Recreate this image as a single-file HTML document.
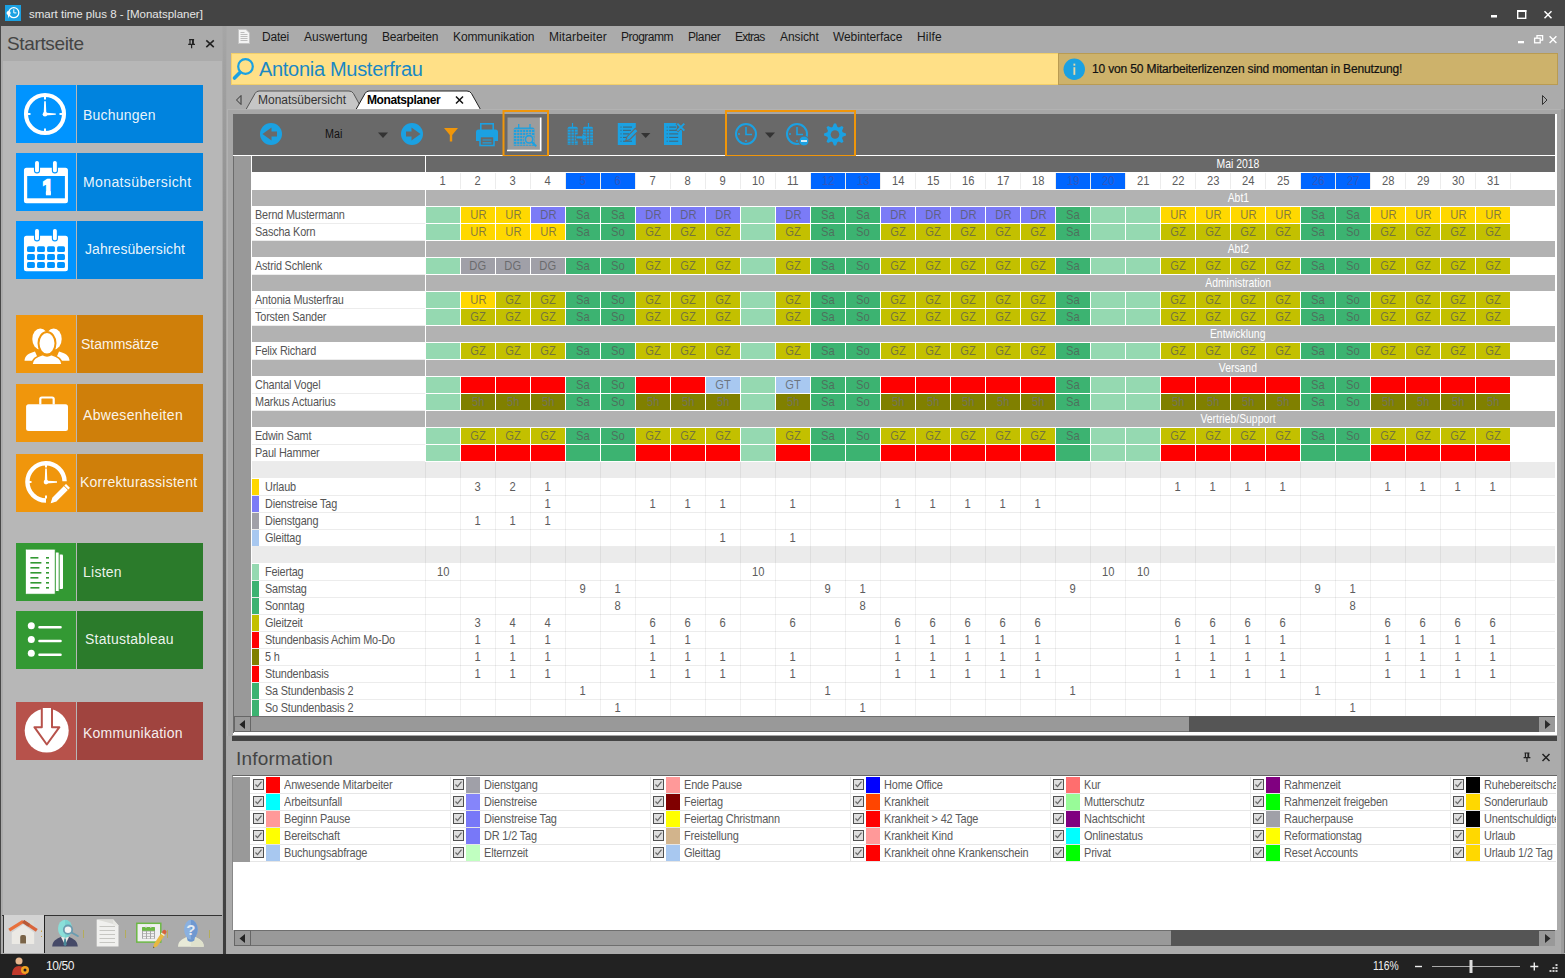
<!DOCTYPE html><html lang="de"><head><meta charset="utf-8"><title>smart time plus 8 - [Monatsplaner]</title><style>
*{box-sizing:border-box;margin:0;padding:0}
html,body{width:1565px;height:978px;overflow:hidden;background:#ababab}
body{position:relative;font-family:"Liberation Sans",sans-serif;font-size:12px;color:#111}
.a{position:absolute}
.t{position:absolute;white-space:nowrap;line-height:1}
#title{left:0;top:0;width:1565px;height:26px;background:#444}
#side{left:0;top:26px;width:222px;height:928px;background:#b7b7b7}
.btn{position:absolute;left:16px;width:187px;height:58px}
.btn .i{position:absolute;left:0;top:0;width:60px;height:58px}
.btn .x{position:absolute;left:61px;top:0;width:126px;height:58px;color:rgba(255,255,255,.93);font-size:14px;letter-spacing:.25px;line-height:60px;white-space:nowrap}
.btn svg{position:absolute;left:0;top:0}
.g{font-size:13px;color:#666}
.cell{position:absolute;width:34px;height:16px;text-align:center;font-size:13px;line-height:16px;color:rgba(85,85,85,.72)}
.num{position:absolute;width:34px;height:16px;text-align:center;font-size:13px;line-height:16px;color:#5c5c5c}
.nm{position:absolute;left:255px;font-size:13px;line-height:16px;color:#555;white-space:nowrap;letter-spacing:-.2px;transform:scaleX(.835);transform-origin:0 50%}
.cell i,.num i,.grp b i{display:inline-block;font-style:normal;transform:scaleX(.86)}
.grp b i{transform:scaleX(.8)}
.grp{position:absolute;left:252px;width:1303px;height:16px;background:#b2b2b2}
/*sep*/.grp u{position:absolute;left:173px;top:0;width:1px;height:16px;background:#fff}
.grp b{position:absolute;left:886px;width:200px;text-align:center;font-weight:normal;font-style:normal;color:#fff;font-size:13px;line-height:16px;letter-spacing:0}
.lg{position:absolute;font-size:13px;line-height:16px;color:#5a5a5a;white-space:nowrap;letter-spacing:-.2px;transform:scaleX(.842);transform-origin:0 50%}
.cb{position:absolute;width:11px;height:11px;border:1px solid #505050;background:#dedede}
.sw{position:absolute;width:14px;height:16px}
</style></head><body><div id="title" class="a"></div><svg class="a" style="left:5px;top:5px" width="16" height="16" viewBox="0 0 16 16"><rect width="16" height="16" fill="#1ba1e2"/><circle cx="8.800" cy="7.700" r="5" fill="none" stroke="#fff" stroke-width="1.300"/><path d="M8.800 4.300v3.600h2.600" stroke="#fff" stroke-width="1" fill="none"/><circle cx="3.600" cy="8" r="2.100" fill="#fff"/><path d="M2.800 9.500l.6 4 1.200-4z" fill="#fff"/></svg><div class="t" style="left:29px;top:8.6px;font-size:11.5px;color:#e6e6e6;letter-spacing:0">smart time plus 8 - [Monatsplaner]</div><svg class="a" style="left:1485px;top:5px" width="75" height="18" viewBox="0 0 75 18"><rect x="6" y="10" width="6" height="2.5" fill="#fff"/><rect x="32.7" y="5.7" width="8" height="7.6" fill="none" stroke="#fff" stroke-width="1.4"/><rect x="32" y="5" width="9.4" height="2" fill="#fff"/><path d="M59.5 6.3l7 7M66.5 6.3l-7 7" stroke="#fff" stroke-width="1.5"/></svg><svg class="a" style="left:1512px;top:32px" width="50" height="14" viewBox="0 0 50 14"><rect x="6" y="9" width="6" height="2.3" fill="#fff"/><rect x="22.6" y="6.2" width="5.6" height="4.6" fill="none" stroke="#fff" stroke-width="1.3"/><path d="M25 6V3.6h5.6v4.6H28.6" fill="none" stroke="#fff" stroke-width="1.3"/><path d="M37.6 4.2l6.8 6.8M44.4 4.2l-6.8 6.8" stroke="#fff" stroke-width="1.4"/></svg><div id="side" class="a"></div><div class="a" style="left:0;top:26px;width:3px;height:928px;background:#ababab"></div><div class="a" style="left:0;top:26px;width:1px;height:928px;background:#484848"></div><div class="a" style="left:1px;top:26px;width:221px;height:35px;background:#ababab"></div><div class="t" style="left:7px;top:34px;font-size:19px;color:#444;letter-spacing:-.35px">Startseite</div><svg class="a" style="left:186px;top:37px" width="34" height="14" viewBox="0 0 34 14"><g transform="translate(-.4 .7)"><path d="M3.500 2h5M4.400 2v4.400M7.600 2v4.400M2.600 6.600h6.800M6 6.600V10.600" stroke="#222" stroke-width="1.200" fill="none"/><rect x="6.400" y="2" width="1.600" height="4.400" fill="#222"/></g><path d="M20.300 3.300l7.500 6.800M27.800 3.300l-7.500 6.800" stroke="#222" stroke-width="1.600"/></svg><div class="a" style="left:222px;top:26px;width:5px;height:928px;background:#a8a8a8"></div><div class="a" style="left:223px;top:26px;width:3px;height:928px;background:linear-gradient(#a6a6a6,#3c3c3c)"></div><div class="btn" style="top:85px"><div class="i" style="background:#0094ff"><svg width="60" height="58" viewBox="0 0 60 58"><circle cx="29" cy="29" r="19" fill="none" stroke="#fff" stroke-width="4.100"/><path d="M27.700 29L28.200 16.200h1.600L30.300 27.800 39.800 28.400v1.400L29 30.600z" fill="#fff"/><circle cx="29" cy="29.200" r="2.300" fill="#fff"/><path d="M29 11.500v3M29 43.500v3M11.500 29h3M43.500 29h3" stroke="#fff" stroke-width="2"/></svg></div><div class="x" style="background:#0083de;padding-left:6px;line-height:60px;letter-spacing:0.2px">Buchungen</div></div><div class="btn" style="top:153px"><div class="i" style="background:#0094ff"><svg width="60" height="58" viewBox="0 0 60 58"><path d="M7.950 17.250a2.500 2.500 0 0 1 2.500-2.500h39a2.500 2.500 0 0 1 2.500 2.500v30.450a2.500 2.500 0 0 1-2.500 2.500h-39a2.500 2.500 0 0 1-2.500-2.500z" fill="#fff"/><rect x="11.200" y="23" width="37.700" height="22.300" fill="#0094ff"/><rect x="18.500" y="7.400" width="5" height="12.500" rx="2.400" fill="#fff" stroke="#0094ff" stroke-width="1.100"/><rect x="36.400" y="7.400" width="5" height="12.500" rx="2.400" fill="#fff" stroke="#0094ff" stroke-width="1.100"/><clipPath id="k1"><path d="M20 20H40V37.600H34.900V46H29.900V37.600H20z"/></clipPath><text x="31.700" y="41.300" clip-path="url(#k1)" style="font-family:'Liberation Sans',sans-serif" font-size="20" fill="#fff" stroke="#fff" stroke-width="2.600" stroke-linejoin="miter" text-anchor="middle">1</text></svg></div><div class="x" style="background:#0083de;padding-left:6px;line-height:58px;letter-spacing:0.39px">Monatsübersicht</div></div><div class="btn" style="top:221px"><div class="i" style="background:#0094ff"><svg width="60" height="58" viewBox="0 0 60 58"><path d="M7.950 17.250a2.500 2.500 0 0 1 2.500-2.500h39a2.500 2.500 0 0 1 2.500 2.500v30.450a2.500 2.500 0 0 1-2.500 2.500h-39a2.500 2.500 0 0 1-2.500-2.500z" fill="#fff"/><rect x="11.03" y="25.13" width="7.870" height="5.800" rx="1.500" fill="#0094ff"/><rect x="21.05" y="25.13" width="7.870" height="5.800" rx="1.500" fill="#0094ff"/><rect x="31.07" y="25.13" width="7.870" height="5.800" rx="1.500" fill="#0094ff"/><rect x="41.09" y="25.13" width="7.870" height="5.800" rx="1.500" fill="#0094ff"/><rect x="11.03" y="33.11" width="7.870" height="5.800" rx="1.500" fill="#0094ff"/><rect x="21.05" y="33.11" width="7.870" height="5.800" rx="1.500" fill="#0094ff"/><rect x="31.07" y="33.11" width="7.870" height="5.800" rx="1.500" fill="#0094ff"/><rect x="41.09" y="33.11" width="7.870" height="5.800" rx="1.500" fill="#0094ff"/><rect x="11.03" y="41.09" width="7.870" height="5.800" rx="1.500" fill="#0094ff"/><rect x="21.05" y="41.09" width="7.870" height="5.800" rx="1.500" fill="#0094ff"/><rect x="31.07" y="41.09" width="7.870" height="5.800" rx="1.500" fill="#0094ff"/><rect x="41.09" y="41.09" width="7.870" height="5.800" rx="1.500" fill="#0094ff"/><rect x="18.500" y="7.400" width="5" height="12.500" rx="2.400" fill="#fff" stroke="#0094ff" stroke-width="1.100"/><rect x="36.400" y="7.400" width="5" height="12.500" rx="2.400" fill="#fff" stroke="#0094ff" stroke-width="1.100"/></svg></div><div class="x" style="background:#0083de;padding-left:8px;line-height:56px;letter-spacing:0.08px">Jahresübersicht</div></div><div class="btn" style="top:315px"><div class="i" style="background:#f0960c"><svg width="60" height="58" viewBox="0 0 60 58"><g fill="#fff"><ellipse cx="24.300" cy="24" rx="8" ry="10.500"/><ellipse cx="37.700" cy="24" rx="8" ry="10.500"/><path d="M8.500 45.800c.3-5.500 4.200-7.500 10.500-9.300l4 9.300z"/><path d="M53.500 45.800c-.3-5.500-4.200-7.500-10.500-9.300l-4 9.300z"/></g><ellipse cx="31" cy="28.300" rx="8.500" ry="11.300" fill="#fff" stroke="#f0960c" stroke-width="2"/><path d="M15.800 49.800c.3-6.300 4.700-8.300 10.900-10.200 2.800 1.700 5.800 1.700 8.600 0 6.200 1.900 10.600 3.900 10.900 10.200z" fill="#fff" stroke="#f0960c" stroke-width="1.500"/></svg></div><div class="x" style="background:#cf7f0a;padding-left:4px;line-height:58px;letter-spacing:0px">Stammsätze</div></div><div class="btn" style="top:384px"><div class="i" style="background:#f0960c"><svg width="60" height="58" viewBox="0 0 60 58"><rect x="10.100" y="20.200" width="41.900" height="26.800" rx="2.500" fill="#fff"/><path d="M24.300 20.500v-5.500a1.500 1.500 0 0 1 1.500-1.500h10.400a1.500 1.500 0 0 1 1.500 1.500v5.500" fill="none" stroke="#fff" stroke-width="2.200"/></svg></div><div class="x" style="background:#cf7f0a;padding-left:6px;line-height:62px;letter-spacing:0.33px">Abwesenheiten</div></div><div class="btn" style="top:454px"><div class="i" style="background:#f0960c"><svg width="60" height="58" viewBox="0 0 60 58"><path d="M48.600 27.300A18.600 18.600 0 1 0 30 46.500" fill="none" stroke="#fff" stroke-width="4.400"/><path d="M28.700 27.900L29.200 14.500h1.600L31.300 26.700 41 27.300v1.400L30 29.500z" fill="#fff"/><circle cx="30" cy="28.100" r="2.300" fill="#fff"/><path d="M30 10.500v3M12.500 27.900h3M30 41.500v3" stroke="#fff" stroke-width="2"/><path d="M33.600 50.300L35.800 43.300 50 29.100 54.800 33.900 40.600 48.100z" fill="#fff" stroke="#f0960c" stroke-width="1.300" stroke-linejoin="round"/><path d="M47.700 31.400l4.800 4.800" stroke="#f0960c" stroke-width="1"/></svg></div><div class="x" style="background:#cf7f0a;padding-left:3px;line-height:56px;letter-spacing:0.25px">Korrekturassistent</div></div><div class="btn" style="top:543px"><div class="i" style="background:#339933"><svg width="60" height="58" viewBox="0 0 60 58"><rect x="39" y="11.500" width="8" height="34.500" rx="1" fill="#fff"/><rect x="36" y="9" width="7.200" height="39.500" rx="1" fill="#fff" stroke="#339933" stroke-width="1"/><rect x="9.300" y="6.100" width="30" height="45.200" rx="1" fill="#fff" stroke="#339933" stroke-width="1"/><rect x="14.400" y="14" width="8" height="1.600" fill="#339933"/><rect x="30" y="14" width="3" height="1.600" fill="#339933"/><rect x="14.400" y="19" width="11" height="1.600" fill="#339933"/><rect x="30" y="19" width="3" height="1.600" fill="#339933"/><rect x="14.400" y="24" width="9" height="1.600" fill="#339933"/><rect x="30" y="24" width="3" height="1.600" fill="#339933"/><rect x="14.400" y="29" width="11" height="1.600" fill="#339933"/><rect x="30" y="29" width="3" height="1.600" fill="#339933"/><rect x="14.400" y="34" width="8" height="1.600" fill="#339933"/><rect x="30" y="34" width="3" height="1.600" fill="#339933"/><rect x="14.400" y="39" width="11" height="1.600" fill="#339933"/><rect x="30" y="39" width="3" height="1.600" fill="#339933"/><rect x="14.400" y="44" width="9" height="1.600" fill="#339933"/><rect x="30" y="44" width="3" height="1.600" fill="#339933"/></svg></div><div class="x" style="background:#2b7b2b;padding-left:6px;line-height:58px;letter-spacing:0.25px">Listen</div></div><div class="btn" style="top:611px"><div class="i" style="background:#339933"><svg width="60" height="58" viewBox="0 0 60 58"><circle cx="15.300" cy="14.700" r="3.500" fill="#fff"/><circle cx="15.300" cy="28.400" r="3.500" fill="#fff"/><circle cx="15.300" cy="42.300" r="3.500" fill="#fff"/><path d="M23.500 16.200h21M23.500 30h21M23.500 43.800h21" stroke="#fff" stroke-width="2.600" stroke-linecap="round"/></svg></div><div class="x" style="background:#2b7b2b;padding-left:8px;line-height:56px;letter-spacing:0.25px">Statustableau</div></div><div class="btn" style="top:702px"><div class="i" style="background:#b7524b"><svg width="60" height="58" viewBox="0 0 60 58"><circle cx="30.700" cy="28.600" r="22" fill="#fff"/><path d="M25.800 6v19.200h-7.400L30.800 42.500 43.400 25.200h-7.400V6" fill="#fff" stroke="#b7524b" stroke-width="2" stroke-linejoin="round"/></svg></div><div class="x" style="background:#a0443f;padding-left:6px;line-height:62px;letter-spacing:0.25px">Kommunikation</div></div><div class="a" style="left:2px;top:915px;width:220px;height:39px;background:#ababab;border-top:1px solid #333"></div><div class="a" style="left:3px;top:915px;width:42px;height:38px;background:#d3d3d3;border-right:1px solid #222;border-left:1px solid #333"></div><svg class="a" style="left:0;top:915px" width="222" height="38" viewBox="0 0 222 38"><rect x="29.500" y="5" width="4.300" height="8" fill="#d8d8d2"/><path d="M11.800 17.500L23.200 9.500l11 8v11.400H11.800z" fill="#ebe9e4"/><path d="M20.200 28.500v-6.500a2 2 0 0 1 2-2h1.800a2 2 0 0 1 2 2v6.500z" fill="#7a6448"/><path d="M9.200 15.200L23.200 6.300" stroke="#e8703c" stroke-width="3.200" fill="none"/><path d="M23.200 6.300l13.600 9" stroke="#d9643a" stroke-width="3.200" fill="none"/><path d="M23.200 6.300l6 4" stroke="#b85a38" stroke-width="3.200" fill="none"/><rect x="41" y="15.500" width="1" height="1.500" fill="#c8a040"/><rect x="41" y="21" width="1" height="1" fill="#c8a040"/><path d="M52.200 31.600c.5-6 4-7.500 8.500-9.600h8.600c4.500 2.100 8 3.600 8.500 9.600z" fill="#464a68"/><path d="M61 22l4 8 4-8z" fill="#ecebe6"/><path d="M64.300 23.500h1.500l.8 6-1.500 2-1.500-2z" fill="#4a8a9a"/><ellipse cx="65" cy="13.700" rx="7" ry="9" fill="#8adfd9"/><path d="M65 4.700a7 9 0 0 1 0 18z" fill="#7ad3d0"/><path d="M71.500 17.500l6.300 3.500" stroke="#6a9cb0" stroke-width="2" stroke-linecap="round"/><circle cx="68" cy="14.700" r="4.200" fill="#f2f2f2" stroke="#6a9cb0" stroke-width="1.800"/><rect x="83" y="15" width="1" height="8" fill="#b4ac5a"/><path d="M96.700 4.500h16.500l5.300 6v21H96.700z" fill="#f0f0ee"/><path d="M96.700 4.500h16.500l5.300 6z" fill="#dcdcd8"/><path d="M113.200 4.500v6h5.300z" fill="#e8e8e4"/><path d="M99.500 11.5h15.500" stroke="#c6c6c2" stroke-width="1"/><path d="M99.500 15.5h15.500" stroke="#c6c6c2" stroke-width="1"/><path d="M99.500 19.5h15.500" stroke="#c6c6c2" stroke-width="1"/><path d="M99.500 23.5h15.500" stroke="#c6c6c2" stroke-width="1"/><path d="M99.500 27.5h15.500" stroke="#c6c6c2" stroke-width="1"/><rect x="125" y="15" width="1" height="8" fill="#b4ac5a"/><rect x="136.800" y="8.300" width="24" height="18.800" fill="#f0f0f0" stroke="#6cb845" stroke-width="1.500"/><rect x="142" y="12" width="13" height="12" rx="1" fill="#a6a6a6"/><path d="M142 13a1 1 0 0 1 1-1h11a1 1 0 0 1 1 1v2.700h-13z" fill="#6cb845"/><rect x="143" y="16.5" width="3" height="1.800" fill="#f4f4f4"/><rect x="147" y="16.5" width="3" height="1.800" fill="#f4f4f4"/><rect x="151" y="16.5" width="3" height="1.800" fill="#f4f4f4"/><rect x="143" y="19.1" width="3" height="1.800" fill="#f4f4f4"/><rect x="147" y="19.1" width="3" height="1.800" fill="#f4f4f4"/><rect x="151" y="19.1" width="3" height="1.800" fill="#f4f4f4"/><rect x="143" y="21.7" width="3" height="1.800" fill="#f4f4f4"/><rect x="147" y="21.7" width="3" height="1.800" fill="#f4f4f4"/><rect x="151" y="21.7" width="3" height="1.800" fill="#f4f4f4"/><path d="M146 10.500v2.500M150.800 10.500v2.500" stroke="#ddd" stroke-width="1"/><path d="M153 33.200l1-4.200 7.800-11.700 3.300 2.200-7.800 11.700z" fill="#e8b840"/><path d="M161.800 17.300l1.200-1.800a2 2 0 0 1 3.300 2.200l-1.200 1.800z" fill="#d8603c"/><path d="M161.100 18.300l3.300 2.200" stroke="#eee" stroke-width="1.200"/><path d="M153 33.200l.4-1.700 1.200.8z" fill="#444"/><rect x="167" y="15" width="1" height="8" fill="#b4ac5a"/><path d="M178 31.800c.3-5.500 3-7 8-9.500h9.800c5 2.500 7.700 4 8 9.500z" fill="#e8ead8"/><path d="M190.900 22.300h4.900c5 2.500 7.700 4 8 9.500h-12.900z" fill="#dfe1cc"/><path d="M186.500 20h8.800l-1 5.500q-3.400 2.500-6.800 0z" fill="#6a94cc"/><ellipse cx="190.900" cy="14.600" rx="6.800" ry="9.800" fill="#8ab0e0"/><path d="M190.900 4.800a6.800 9.800 0 0 1 0 19.600z" fill="#6f98d0"/><text x="190.900" y="20" style="font-family:'Liberation Sans',sans-serif" font-weight="bold" font-size="15" fill="#e6ecf2" text-anchor="middle">?</text><rect x="209" y="15" width="1" height="8" fill="#b4ac5a"/></svg><div class="a" style="left:0;top:954px;width:1565px;height:24px;background:#222"></div><svg class="a" style="left:11px;top:956px" width="20" height="20" viewBox="0 0 20 20"><circle cx="8" cy="5" r="3.5" fill="#e8b890"/><path d="M1 19c0-6 3-9 7-9s7 3 7 9z" fill="#c0392b"/><circle cx="14" cy="14" r="4" fill="#f0a020"/><circle cx="14" cy="14" r="1.5" fill="#1e1e1e"/></svg><div class="t" style="left:46px;top:960px;font-size:12px;color:#f0f0f0;letter-spacing:-.4px">10/50</div><div class="t" style="left:1372.5px;top:960px;font-size:12px;color:#f0f0f0;transform:scaleX(.86);transform-origin:0 50%">116%</div><svg class="a" style="left:1410px;top:956px" width="150" height="20" viewBox="0 0 150 20"><path d="M5 10.5h7" stroke="#eee" stroke-width="1.4"/><path d="M22 10.5h88" stroke="#aaa" stroke-width="1"/><rect x="59.5" y="4" width="3" height="13" fill="#ddd"/><path d="M120.300 10.500h8M124.300 6.500v8" stroke="#eee" stroke-width="1.400"/><g fill="#ccc"><rect x="145.500" y="8" width="2" height="2"/><rect x="145.500" y="11" width="2" height="2"/><rect x="145.500" y="14" width="2" height="2"/><rect x="142.500" y="11" width="2" height="2"/><rect x="142.500" y="14" width="2" height="2"/><rect x="139.500" y="14" width="2" height="2"/></g></svg><svg class="a" style="left:238px;top:29px" width="12" height="15" viewBox="0 0 12 15"><path d="M.5 .5h7.5l3.5 3.5v10.5H.5z" fill="#f4f4f4" stroke="#c4c4c4" stroke-width="1"/><path d="M2.5 5.5h7M2.5 7.5h7M2.5 9.5h7M2.5 11.5h7M2.5 3.500h4" stroke="#bdbdbd" stroke-width="1"/></svg><div class="t mn" style="left:262px;top:31px;font-size:12px;color:#1a1a1a;letter-spacing:-0.2px">Datei</div><div class="t mn" style="left:304px;top:31px;font-size:12px;color:#1a1a1a;letter-spacing:0px">Auswertung</div><div class="t mn" style="left:382px;top:31px;font-size:12px;color:#1a1a1a;letter-spacing:-0.18px">Bearbeiten</div><div class="t mn" style="left:453px;top:31px;font-size:12px;color:#1a1a1a;letter-spacing:-0.1px">Kommunikation</div><div class="t mn" style="left:549px;top:31px;font-size:12px;color:#1a1a1a;letter-spacing:0.1px">Mitarbeiter</div><div class="t mn" style="left:621px;top:31px;font-size:12px;color:#1a1a1a;letter-spacing:-0.5px">Programm</div><div class="t mn" style="left:688px;top:31px;font-size:12px;color:#1a1a1a;letter-spacing:-0.4px">Planer</div><div class="t mn" style="left:735px;top:31px;font-size:12px;color:#1a1a1a;letter-spacing:-0.75px">Extras</div><div class="t mn" style="left:780px;top:31px;font-size:12px;color:#1a1a1a;letter-spacing:-0.1px">Ansicht</div><div class="t mn" style="left:833px;top:31px;font-size:12px;color:#1a1a1a;letter-spacing:-0.1px">Webinterface</div><div class="t mn" style="left:917px;top:31px;font-size:12px;color:#1a1a1a;letter-spacing:0.15px">Hilfe</div><div class="a" style="left:231px;top:53px;width:827px;height:32px;background:#ffe087;border:1px solid #f2cf6a;border-right:none"></div><svg class="a" style="left:231px;top:56px" width="26" height="26" viewBox="0 0 26 26"><circle cx="14.5" cy="10.500" r="7.3" fill="none" stroke="#1ba1e2" stroke-width="2.2"/><path d="M9 16.500l-5.500 5.500" stroke="#1ba1e2" stroke-width="3.6" stroke-linecap="round"/></svg><div class="t" style="left:259px;top:59px;font-size:20px;color:#1a88c4;letter-spacing:-.3px">Antonia Musterfrau</div><div class="a" style="left:1058px;top:53px;width:500px;height:32px;background:#cdb26b;border:1px solid #b99b52"></div><svg class="a" style="left:1063px;top:58px" width="22.500" height="22.500" viewBox="0 0 22 22"><circle cx="11" cy="11" r="10.500" fill="#1ba1e2"/><rect x="10.200" y="9" width="1.8" height="7.500" fill="#e8d9a8"/><rect x="10.200" y="5.500" width="1.800" height="2" fill="#e8d9a8"/></svg><div class="t" style="left:1092px;top:63px;font-size:12px;color:#111;letter-spacing:-.15px;-webkit-text-stroke:.2px #111">10 von 50 Mitarbeiterlizenzen sind momentan in Benutzung!</div><svg class="a" style="left:231px;top:88px" width="1330" height="22" viewBox="0 0 1330 22"><path d="M10 7.500l-4.500 4.500 4.500 4.500z" fill="none" stroke="#333" stroke-width="1"/><path d="M1311.500 7.500l4.500 4.500-4.500 4.500z" fill="none" stroke="#333" stroke-width="1"/><path d="M15 21.500L24 5.500q1.500-2.500 4-2.500h90q3 0 4.500 2.500L131 21" fill="#c6c6c6" stroke="#555" stroke-width="1"/><path d="M125 21.500L134 5.500q1.500-2.500 4-2.500h98q3 0 4.500 2.500L249.500 21.500" fill="#fff" stroke="#222" stroke-width="1"/><path d="M225 8.500l7 7M232 8.500l-7 7" stroke="#111" stroke-width="1.5"/></svg><div class="t" style="left:258px;top:94px;font-size:12px;color:#333;letter-spacing:0">Monatsübersicht</div><div class="t" style="left:367px;top:94px;font-size:12px;color:#000;font-weight:bold;letter-spacing:-.4px">Monatsplaner</div><div class="a" style="left:227px;top:109px;width:1335px;height:627px;background:#a6a6a6;border:1px solid #b2b2b2;border-bottom:none"></div><div class="a" style="left:1561px;top:109px;width:3px;height:845px;background:#9c9c9c"></div><div class="a" style="left:233px;top:114px;width:1324px;height:621px;background:#fff"></div><div class="a" style="left:233px;top:114px;width:1322px;height:41px;background:#696969"></div><div class="a" style="left:233px;top:156px;width:1px;height:577px;background:#6c6c6c"></div><svg class="a" style="left:233px;top:110px" width="640" height="48" viewBox="0 0 640 48"><circle cx="38" cy="24" r="11" fill="#1ba1e2"/><path d="M29.500 24l9-6.500v4h5.500v5h-5.500v4z" fill="#696969"/><circle cx="179" cy="24" r="11" fill="#1ba1e2"/><path d="M187.500 24l-9-6.500v4h-5.500v5h5.500v4z" fill="#696969"/><path d="M145 22.500h10l-5 5.500z" fill="#333"/><path d="M211 18h14l-5.800 7v6.500h-2.400V25z" fill="#f0960a"/><g><rect x="247.800" y="13.800" width="12.400" height="8" fill="none" stroke="#1ba1e2" stroke-width="1.600"/><path d="M243 22a2.500 2.500 0 0 1 2.500-2.500h17a2.500 2.500 0 0 1 2.500 2.500v9h-22z" fill="#1ba1e2"/><rect x="247" y="26.500" width="14" height="9" fill="#696969" stroke="#1ba1e2" stroke-width="1.600"/><path d="M249.500 30h9M249.500 32.800h9" stroke="#1ba1e2" stroke-width="1.200"/></g><rect x="274.500" y="7.500" width="32.500" height="32.500" fill="#9c9c9c"/><path d="M274 40.500h33.700V7.500" fill="none" stroke="#fff" stroke-width="1.600"/><rect x="270.500" y="1" width="44.500" height="45" fill="none" stroke="#f0960a" stroke-width="2"/><path d="M280.800 19.500a2 2 0 0 1 2-2h16.700a2 2 0 0 1 2 2v16.200h-20.700z" fill="#1ba1e2"/><path d="M283.76 19.800v16" stroke="#9c9c9c" stroke-width=".800"/><path d="M286.72 19.800v16" stroke="#9c9c9c" stroke-width=".800"/><path d="M289.68 19.800v16" stroke="#9c9c9c" stroke-width=".800"/><path d="M292.64 19.800v16" stroke="#9c9c9c" stroke-width=".800"/><path d="M295.6 19.800v16" stroke="#9c9c9c" stroke-width=".800"/><path d="M298.56 19.800v16" stroke="#9c9c9c" stroke-width=".800"/><path d="M280.800 19.4h20.700" stroke="#9c9c9c" stroke-width=".800"/><path d="M280.800 22.55h20.700" stroke="#9c9c9c" stroke-width=".800"/><path d="M280.800 25.5h20.700" stroke="#9c9c9c" stroke-width=".800"/><path d="M280.800 28.45h20.700" stroke="#9c9c9c" stroke-width=".800"/><path d="M280.800 31.4h20.700" stroke="#9c9c9c" stroke-width=".800"/><path d="M280.800 34.35h20.700" stroke="#9c9c9c" stroke-width=".800"/><path d="M285.700 14v5M297 14v5" stroke="#1ba1e2" stroke-width="1.300"/><circle cx="296.100" cy="29.300" r="5.300" fill="#9c9c9c"/><circle cx="296.100" cy="29.300" r="3.700" fill="#9c9c9c" stroke="#1ba1e2" stroke-width="1.600"/><path d="M299 32.300l4.300 4" stroke="#1ba1e2" stroke-width="1.900"/><path d="M334.7 18.300a1.500 1.500 0 0 1 1.500-1.500h7a1.500 1.500 0 0 1 1.500 1.500v16.700h-10z" fill="#1ba1e2"/><path d="M338.03 19v16" stroke="#696969" stroke-width=".800"/><path d="M341.36 19v16" stroke="#696969" stroke-width=".800"/><path d="M334.7 19.2h10" stroke="#696969" stroke-width=".800"/><path d="M334.7 22.15h10" stroke="#696969" stroke-width=".800"/><path d="M334.7 25.1h10" stroke="#696969" stroke-width=".800"/><path d="M334.7 28.05h10" stroke="#696969" stroke-width=".800"/><path d="M334.7 31h10" stroke="#696969" stroke-width=".800"/><path d="M334.7 33.95h10" stroke="#696969" stroke-width=".800"/><path d="M339.5 13v4.500" stroke="#1ba1e2" stroke-width="1.200"/><path d="M350 18.300a1.500 1.500 0 0 1 1.500-1.500h7a1.500 1.500 0 0 1 1.500 1.500v16.700h-10z" fill="#1ba1e2"/><path d="M353.33 19v16" stroke="#696969" stroke-width=".800"/><path d="M356.66 19v16" stroke="#696969" stroke-width=".800"/><path d="M350 19.2h10" stroke="#696969" stroke-width=".800"/><path d="M350 22.15h10" stroke="#696969" stroke-width=".800"/><path d="M350 25.1h10" stroke="#696969" stroke-width=".800"/><path d="M350 28.05h10" stroke="#696969" stroke-width=".800"/><path d="M350 31h10" stroke="#696969" stroke-width=".800"/><path d="M350 33.95h10" stroke="#696969" stroke-width=".800"/><path d="M355.5 13v4.500" stroke="#1ba1e2" stroke-width="1.200"/><path d="M343 24.500h8.500v6h-8.500z" fill="#696969"/><path d="M343.400 26.200h6v-2.200l4.600 3.400-4.600 3.400v-2.200h-6z" fill="#1ba1e2"/><rect x="384.800" y="13" width="18" height="22" fill="#1ba1e2"/><path d="M387.500 17.1h1M390 17.1h9" stroke="#4a5a64" stroke-width=".900"/><path d="M387.500 20.3h1M390 20.3h8" stroke="#4a5a64" stroke-width=".900"/><path d="M387.500 23.9h1M390 23.9h6" stroke="#4a5a64" stroke-width=".900"/><path d="M387.500 27.4h1M390 27.4h4" stroke="#4a5a64" stroke-width=".900"/><path d="M387.500 31.2h1M390 31.2h9" stroke="#4a5a64" stroke-width=".900"/><path d="M392.600 31l1.400-4.300 8.300-8.300 2.800 2.800-8.300 8.300z" fill="#1ba1e2" stroke="#696969" stroke-width="1.100"/><path d="M408 23.100h9.400l-4.700 5z" fill="#333"/><path d="M431 13h13v7h5v15h-18z" fill="#1ba1e2"/><path d="M433.700 17.1h1M436.200 17.1h7" stroke="#4a5a64" stroke-width=".900"/><path d="M433.700 20.3h1M436.200 20.3h8" stroke="#4a5a64" stroke-width=".900"/><path d="M433.700 23.9h1M436.200 23.9h9" stroke="#4a5a64" stroke-width=".900"/><path d="M433.700 27.4h1M436.200 27.4h9" stroke="#4a5a64" stroke-width=".900"/><path d="M433.700 31.2h1M436.200 31.2h9" stroke="#4a5a64" stroke-width=".900"/><path d="M443.800 13.100l8 8M451.800 13.100l-8 8" stroke="#696969" stroke-width="3.600"/><path d="M444.300 13.600l7 7M451.300 13.600l-7 7" stroke="#1ba1e2" stroke-width="2"/><rect x="493" y="1" width="129" height="45" fill="none" stroke="#f0960a" stroke-width="2"/><circle cx="513" cy="24" r="10" fill="none" stroke="#1ba1e2" stroke-width="2"/><path d="M513 17v7.500h6" fill="none" stroke="#1ba1e2" stroke-width="1.600"/><path d="M505 24h2M513 32v-2" stroke="#1ba1e2" stroke-width="1.400"/><path d="M532 22.500h10l-5 5.500z" fill="#333"/><circle cx="564" cy="24" r="10" fill="none" stroke="#1ba1e2" stroke-width="2"/><path d="M564 17v7.500h6" fill="none" stroke="#1ba1e2" stroke-width="1.600"/><path d="M556 24h2M564 32v-2" stroke="#1ba1e2" stroke-width="1.400"/><circle cx="571" cy="31" r="5" fill="#1ba1e2" stroke="#696969" stroke-width="1"/><path d="M568 31h6" stroke="#fff" stroke-width="1.600"/><path d="M600.92 13.55L603.08 13.55L604.32 16.84L605.77 17.44L608.98 16.00L610.50 17.52L609.06 20.73L609.66 22.18L612.95 23.42L612.95 25.58L609.66 26.82L609.06 28.27L610.50 31.48L608.98 33.00L605.77 31.56L604.32 32.16L603.08 35.45L600.92 35.45L599.68 32.16L598.23 31.56L595.02 33.00L593.50 31.48L594.94 28.27L594.34 26.82L591.05 25.58L591.05 23.42L594.34 22.18L594.94 20.73L593.50 17.52L595.02 16.00L598.23 17.44L599.68 16.84z" fill="#1ba1e2"/><circle cx="602" cy="24.500" r="4.300" fill="#696969"/></svg><div class="t" style="left:325px;top:128px;font-size:12.5px;color:#111;transform:scaleX(.86);transform-origin:0 50%">Mai</div><div class="a" style="left:234px;top:156px;width:17px;height:560px;background:#999"></div><div class="a" style="left:252px;top:156px;width:173px;height:16px;background:#696969"></div><div class="a" style="left:426px;top:156px;width:1129px;height:16px;background:#696969"></div><div class="t" style="left:1138px;top:157px;width:200px;text-align:center;font-size:13px;color:#fff;transform:scaleX(.8)">Mai 2018</div><div class="num" style="left:426px;top:173px"><i>1</i></div><div class="num" style="left:461px;top:173px"><i>2</i></div><div class="num" style="left:496px;top:173px"><i>3</i></div><div class="num" style="left:531px;top:173px"><i>4</i></div><div class="num" style="left:566px;top:173px;background:#0066ff;color:#3157c0"><i>5</i></div><div class="num" style="left:601px;top:173px;background:#0066ff;color:#3157c0"><i>6</i></div><div class="num" style="left:636px;top:173px"><i>7</i></div><div class="num" style="left:671px;top:173px"><i>8</i></div><div class="num" style="left:706px;top:173px"><i>9</i></div><div class="num" style="left:741px;top:173px"><i>10</i></div><div class="num" style="left:776px;top:173px"><i>11</i></div><div class="num" style="left:811px;top:173px;background:#0066ff;color:#3157c0"><i>12</i></div><div class="num" style="left:846px;top:173px;background:#0066ff;color:#3157c0"><i>13</i></div><div class="num" style="left:881px;top:173px"><i>14</i></div><div class="num" style="left:916px;top:173px"><i>15</i></div><div class="num" style="left:951px;top:173px"><i>16</i></div><div class="num" style="left:986px;top:173px"><i>17</i></div><div class="num" style="left:1021px;top:173px"><i>18</i></div><div class="num" style="left:1056px;top:173px;background:#0066ff;color:#3157c0"><i>19</i></div><div class="num" style="left:1091px;top:173px;background:#0066ff;color:#3157c0"><i>20</i></div><div class="num" style="left:1126px;top:173px"><i>21</i></div><div class="num" style="left:1161px;top:173px"><i>22</i></div><div class="num" style="left:1196px;top:173px"><i>23</i></div><div class="num" style="left:1231px;top:173px"><i>24</i></div><div class="num" style="left:1266px;top:173px"><i>25</i></div><div class="num" style="left:1301px;top:173px;background:#0066ff;color:#3157c0"><i>26</i></div><div class="num" style="left:1336px;top:173px;background:#0066ff;color:#3157c0"><i>27</i></div><div class="num" style="left:1371px;top:173px"><i>28</i></div><div class="num" style="left:1406px;top:173px"><i>29</i></div><div class="num" style="left:1441px;top:173px"><i>30</i></div><div class="num" style="left:1476px;top:173px"><i>31</i></div><div class="a" style="left:460px;top:173px;width:1px;height:16px;background:#ececec"></div><div class="a" style="left:495px;top:173px;width:1px;height:16px;background:#ececec"></div><div class="a" style="left:530px;top:173px;width:1px;height:16px;background:#ececec"></div><div class="a" style="left:565px;top:173px;width:1px;height:16px;background:#ececec"></div><div class="a" style="left:600px;top:173px;width:1px;height:16px;background:#ececec"></div><div class="a" style="left:635px;top:173px;width:1px;height:16px;background:#ececec"></div><div class="a" style="left:670px;top:173px;width:1px;height:16px;background:#ececec"></div><div class="a" style="left:705px;top:173px;width:1px;height:16px;background:#ececec"></div><div class="a" style="left:740px;top:173px;width:1px;height:16px;background:#ececec"></div><div class="a" style="left:775px;top:173px;width:1px;height:16px;background:#ececec"></div><div class="a" style="left:810px;top:173px;width:1px;height:16px;background:#ececec"></div><div class="a" style="left:845px;top:173px;width:1px;height:16px;background:#ececec"></div><div class="a" style="left:880px;top:173px;width:1px;height:16px;background:#ececec"></div><div class="a" style="left:915px;top:173px;width:1px;height:16px;background:#ececec"></div><div class="a" style="left:950px;top:173px;width:1px;height:16px;background:#ececec"></div><div class="a" style="left:985px;top:173px;width:1px;height:16px;background:#ececec"></div><div class="a" style="left:1020px;top:173px;width:1px;height:16px;background:#ececec"></div><div class="a" style="left:1055px;top:173px;width:1px;height:16px;background:#ececec"></div><div class="a" style="left:1090px;top:173px;width:1px;height:16px;background:#ececec"></div><div class="a" style="left:1125px;top:173px;width:1px;height:16px;background:#ececec"></div><div class="a" style="left:1160px;top:173px;width:1px;height:16px;background:#ececec"></div><div class="a" style="left:1195px;top:173px;width:1px;height:16px;background:#ececec"></div><div class="a" style="left:1230px;top:173px;width:1px;height:16px;background:#ececec"></div><div class="a" style="left:1265px;top:173px;width:1px;height:16px;background:#ececec"></div><div class="a" style="left:1300px;top:173px;width:1px;height:16px;background:#ececec"></div><div class="a" style="left:1335px;top:173px;width:1px;height:16px;background:#ececec"></div><div class="a" style="left:1370px;top:173px;width:1px;height:16px;background:#ececec"></div><div class="a" style="left:1405px;top:173px;width:1px;height:16px;background:#ececec"></div><div class="a" style="left:1440px;top:173px;width:1px;height:16px;background:#ececec"></div><div class="a" style="left:1475px;top:173px;width:1px;height:16px;background:#ececec"></div><div class="a" style="left:1510px;top:173px;width:1px;height:16px;background:#ececec"></div><div class="grp" style="top:190px"><u></u><b><i>Abt1</i></b></div><div class="nm" style="top:207px">Bernd Mustermann</div><div class="a" style="left:252px;top:223px;width:173px;height:1px;background:#ececec"></div><div class="cell" style="left:426px;top:207px;background:#95d9b1"></div><div class="cell" style="left:461px;top:207px;background:#ffd800"><i>UR</i></div><div class="cell" style="left:496px;top:207px;background:#ffd800"><i>UR</i></div><div class="cell" style="left:531px;top:207px;background:#7b7bf7"><i>DR</i></div><div class="cell" style="left:566px;top:207px;background:#3cb371"><i>Sa</i></div><div class="cell" style="left:601px;top:207px;background:#3cb371"><i>Sa</i></div><div class="cell" style="left:636px;top:207px;background:#7b7bf7"><i>DR</i></div><div class="cell" style="left:671px;top:207px;background:#7b7bf7"><i>DR</i></div><div class="cell" style="left:706px;top:207px;background:#7b7bf7"><i>DR</i></div><div class="cell" style="left:741px;top:207px;background:#95d9b1"></div><div class="cell" style="left:776px;top:207px;background:#7b7bf7"><i>DR</i></div><div class="cell" style="left:811px;top:207px;background:#3cb371"><i>Sa</i></div><div class="cell" style="left:846px;top:207px;background:#3cb371"><i>Sa</i></div><div class="cell" style="left:881px;top:207px;background:#7b7bf7"><i>DR</i></div><div class="cell" style="left:916px;top:207px;background:#7b7bf7"><i>DR</i></div><div class="cell" style="left:951px;top:207px;background:#7b7bf7"><i>DR</i></div><div class="cell" style="left:986px;top:207px;background:#7b7bf7"><i>DR</i></div><div class="cell" style="left:1021px;top:207px;background:#7b7bf7"><i>DR</i></div><div class="cell" style="left:1056px;top:207px;background:#3cb371"><i>Sa</i></div><div class="cell" style="left:1091px;top:207px;background:#95d9b1"></div><div class="cell" style="left:1126px;top:207px;background:#95d9b1"></div><div class="cell" style="left:1161px;top:207px;background:#ffd800"><i>UR</i></div><div class="cell" style="left:1196px;top:207px;background:#ffd800"><i>UR</i></div><div class="cell" style="left:1231px;top:207px;background:#ffd800"><i>UR</i></div><div class="cell" style="left:1266px;top:207px;background:#ffd800"><i>UR</i></div><div class="cell" style="left:1301px;top:207px;background:#3cb371"><i>Sa</i></div><div class="cell" style="left:1336px;top:207px;background:#3cb371"><i>Sa</i></div><div class="cell" style="left:1371px;top:207px;background:#ffd800"><i>UR</i></div><div class="cell" style="left:1406px;top:207px;background:#ffd800"><i>UR</i></div><div class="cell" style="left:1441px;top:207px;background:#ffd800"><i>UR</i></div><div class="cell" style="left:1476px;top:207px;background:#ffd800"><i>UR</i></div><div class="nm" style="top:224px">Sascha Korn</div><div class="a" style="left:252px;top:240px;width:173px;height:1px;background:#ececec"></div><div class="cell" style="left:426px;top:224px;background:#95d9b1"></div><div class="cell" style="left:461px;top:224px;background:#ffd800"><i>UR</i></div><div class="cell" style="left:496px;top:224px;background:#ffd800"><i>UR</i></div><div class="cell" style="left:531px;top:224px;background:#ffd800"><i>UR</i></div><div class="cell" style="left:566px;top:224px;background:#3cb371"><i>Sa</i></div><div class="cell" style="left:601px;top:224px;background:#3cb371"><i>So</i></div><div class="cell" style="left:636px;top:224px;background:#c3c000"><i>GZ</i></div><div class="cell" style="left:671px;top:224px;background:#c3c000"><i>GZ</i></div><div class="cell" style="left:706px;top:224px;background:#c3c000"><i>GZ</i></div><div class="cell" style="left:741px;top:224px;background:#95d9b1"></div><div class="cell" style="left:776px;top:224px;background:#c3c000"><i>GZ</i></div><div class="cell" style="left:811px;top:224px;background:#3cb371"><i>Sa</i></div><div class="cell" style="left:846px;top:224px;background:#3cb371"><i>So</i></div><div class="cell" style="left:881px;top:224px;background:#c3c000"><i>GZ</i></div><div class="cell" style="left:916px;top:224px;background:#c3c000"><i>GZ</i></div><div class="cell" style="left:951px;top:224px;background:#c3c000"><i>GZ</i></div><div class="cell" style="left:986px;top:224px;background:#c3c000"><i>GZ</i></div><div class="cell" style="left:1021px;top:224px;background:#c3c000"><i>GZ</i></div><div class="cell" style="left:1056px;top:224px;background:#3cb371"><i>Sa</i></div><div class="cell" style="left:1091px;top:224px;background:#95d9b1"></div><div class="cell" style="left:1126px;top:224px;background:#95d9b1"></div><div class="cell" style="left:1161px;top:224px;background:#c3c000"><i>GZ</i></div><div class="cell" style="left:1196px;top:224px;background:#c3c000"><i>GZ</i></div><div class="cell" style="left:1231px;top:224px;background:#c3c000"><i>GZ</i></div><div class="cell" style="left:1266px;top:224px;background:#c3c000"><i>GZ</i></div><div class="cell" style="left:1301px;top:224px;background:#3cb371"><i>Sa</i></div><div class="cell" style="left:1336px;top:224px;background:#3cb371"><i>So</i></div><div class="cell" style="left:1371px;top:224px;background:#c3c000"><i>GZ</i></div><div class="cell" style="left:1406px;top:224px;background:#c3c000"><i>GZ</i></div><div class="cell" style="left:1441px;top:224px;background:#c3c000"><i>GZ</i></div><div class="cell" style="left:1476px;top:224px;background:#c3c000"><i>GZ</i></div><div class="grp" style="top:241px"><u></u><b><i>Abt2</i></b></div><div class="nm" style="top:258px">Astrid Schlenk</div><div class="a" style="left:252px;top:274px;width:173px;height:1px;background:#ececec"></div><div class="cell" style="left:426px;top:258px;background:#95d9b1"></div><div class="cell" style="left:461px;top:258px;background:#a0a0a8"><i>DG</i></div><div class="cell" style="left:496px;top:258px;background:#a0a0a8"><i>DG</i></div><div class="cell" style="left:531px;top:258px;background:#a0a0a8"><i>DG</i></div><div class="cell" style="left:566px;top:258px;background:#3cb371"><i>Sa</i></div><div class="cell" style="left:601px;top:258px;background:#3cb371"><i>So</i></div><div class="cell" style="left:636px;top:258px;background:#c3c000"><i>GZ</i></div><div class="cell" style="left:671px;top:258px;background:#c3c000"><i>GZ</i></div><div class="cell" style="left:706px;top:258px;background:#c3c000"><i>GZ</i></div><div class="cell" style="left:741px;top:258px;background:#95d9b1"></div><div class="cell" style="left:776px;top:258px;background:#c3c000"><i>GZ</i></div><div class="cell" style="left:811px;top:258px;background:#3cb371"><i>Sa</i></div><div class="cell" style="left:846px;top:258px;background:#3cb371"><i>So</i></div><div class="cell" style="left:881px;top:258px;background:#c3c000"><i>GZ</i></div><div class="cell" style="left:916px;top:258px;background:#c3c000"><i>GZ</i></div><div class="cell" style="left:951px;top:258px;background:#c3c000"><i>GZ</i></div><div class="cell" style="left:986px;top:258px;background:#c3c000"><i>GZ</i></div><div class="cell" style="left:1021px;top:258px;background:#c3c000"><i>GZ</i></div><div class="cell" style="left:1056px;top:258px;background:#3cb371"><i>Sa</i></div><div class="cell" style="left:1091px;top:258px;background:#95d9b1"></div><div class="cell" style="left:1126px;top:258px;background:#95d9b1"></div><div class="cell" style="left:1161px;top:258px;background:#c3c000"><i>GZ</i></div><div class="cell" style="left:1196px;top:258px;background:#c3c000"><i>GZ</i></div><div class="cell" style="left:1231px;top:258px;background:#c3c000"><i>GZ</i></div><div class="cell" style="left:1266px;top:258px;background:#c3c000"><i>GZ</i></div><div class="cell" style="left:1301px;top:258px;background:#3cb371"><i>Sa</i></div><div class="cell" style="left:1336px;top:258px;background:#3cb371"><i>So</i></div><div class="cell" style="left:1371px;top:258px;background:#c3c000"><i>GZ</i></div><div class="cell" style="left:1406px;top:258px;background:#c3c000"><i>GZ</i></div><div class="cell" style="left:1441px;top:258px;background:#c3c000"><i>GZ</i></div><div class="cell" style="left:1476px;top:258px;background:#c3c000"><i>GZ</i></div><div class="grp" style="top:275px"><u></u><b><i>Administration</i></b></div><div class="nm" style="top:292px">Antonia Musterfrau</div><div class="a" style="left:252px;top:308px;width:173px;height:1px;background:#ececec"></div><div class="cell" style="left:426px;top:292px;background:#95d9b1"></div><div class="cell" style="left:461px;top:292px;background:#ffd800"><i>UR</i></div><div class="cell" style="left:496px;top:292px;background:#c3c000"><i>GZ</i></div><div class="cell" style="left:531px;top:292px;background:#c3c000"><i>GZ</i></div><div class="cell" style="left:566px;top:292px;background:#3cb371"><i>Sa</i></div><div class="cell" style="left:601px;top:292px;background:#3cb371"><i>So</i></div><div class="cell" style="left:636px;top:292px;background:#c3c000"><i>GZ</i></div><div class="cell" style="left:671px;top:292px;background:#c3c000"><i>GZ</i></div><div class="cell" style="left:706px;top:292px;background:#c3c000"><i>GZ</i></div><div class="cell" style="left:741px;top:292px;background:#95d9b1"></div><div class="cell" style="left:776px;top:292px;background:#c3c000"><i>GZ</i></div><div class="cell" style="left:811px;top:292px;background:#3cb371"><i>Sa</i></div><div class="cell" style="left:846px;top:292px;background:#3cb371"><i>So</i></div><div class="cell" style="left:881px;top:292px;background:#c3c000"><i>GZ</i></div><div class="cell" style="left:916px;top:292px;background:#c3c000"><i>GZ</i></div><div class="cell" style="left:951px;top:292px;background:#c3c000"><i>GZ</i></div><div class="cell" style="left:986px;top:292px;background:#c3c000"><i>GZ</i></div><div class="cell" style="left:1021px;top:292px;background:#c3c000"><i>GZ</i></div><div class="cell" style="left:1056px;top:292px;background:#3cb371"><i>Sa</i></div><div class="cell" style="left:1091px;top:292px;background:#95d9b1"></div><div class="cell" style="left:1126px;top:292px;background:#95d9b1"></div><div class="cell" style="left:1161px;top:292px;background:#c3c000"><i>GZ</i></div><div class="cell" style="left:1196px;top:292px;background:#c3c000"><i>GZ</i></div><div class="cell" style="left:1231px;top:292px;background:#c3c000"><i>GZ</i></div><div class="cell" style="left:1266px;top:292px;background:#c3c000"><i>GZ</i></div><div class="cell" style="left:1301px;top:292px;background:#3cb371"><i>Sa</i></div><div class="cell" style="left:1336px;top:292px;background:#3cb371"><i>So</i></div><div class="cell" style="left:1371px;top:292px;background:#c3c000"><i>GZ</i></div><div class="cell" style="left:1406px;top:292px;background:#c3c000"><i>GZ</i></div><div class="cell" style="left:1441px;top:292px;background:#c3c000"><i>GZ</i></div><div class="cell" style="left:1476px;top:292px;background:#c3c000"><i>GZ</i></div><div class="nm" style="top:309px">Torsten Sander</div><div class="a" style="left:252px;top:325px;width:173px;height:1px;background:#ececec"></div><div class="cell" style="left:426px;top:309px;background:#95d9b1"></div><div class="cell" style="left:461px;top:309px;background:#c3c000"><i>GZ</i></div><div class="cell" style="left:496px;top:309px;background:#c3c000"><i>GZ</i></div><div class="cell" style="left:531px;top:309px;background:#c3c000"><i>GZ</i></div><div class="cell" style="left:566px;top:309px;background:#3cb371"><i>Sa</i></div><div class="cell" style="left:601px;top:309px;background:#3cb371"><i>So</i></div><div class="cell" style="left:636px;top:309px;background:#c3c000"><i>GZ</i></div><div class="cell" style="left:671px;top:309px;background:#c3c000"><i>GZ</i></div><div class="cell" style="left:706px;top:309px;background:#c3c000"><i>GZ</i></div><div class="cell" style="left:741px;top:309px;background:#95d9b1"></div><div class="cell" style="left:776px;top:309px;background:#c3c000"><i>GZ</i></div><div class="cell" style="left:811px;top:309px;background:#3cb371"><i>Sa</i></div><div class="cell" style="left:846px;top:309px;background:#3cb371"><i>So</i></div><div class="cell" style="left:881px;top:309px;background:#c3c000"><i>GZ</i></div><div class="cell" style="left:916px;top:309px;background:#c3c000"><i>GZ</i></div><div class="cell" style="left:951px;top:309px;background:#c3c000"><i>GZ</i></div><div class="cell" style="left:986px;top:309px;background:#c3c000"><i>GZ</i></div><div class="cell" style="left:1021px;top:309px;background:#c3c000"><i>GZ</i></div><div class="cell" style="left:1056px;top:309px;background:#3cb371"><i>Sa</i></div><div class="cell" style="left:1091px;top:309px;background:#95d9b1"></div><div class="cell" style="left:1126px;top:309px;background:#95d9b1"></div><div class="cell" style="left:1161px;top:309px;background:#c3c000"><i>GZ</i></div><div class="cell" style="left:1196px;top:309px;background:#c3c000"><i>GZ</i></div><div class="cell" style="left:1231px;top:309px;background:#c3c000"><i>GZ</i></div><div class="cell" style="left:1266px;top:309px;background:#c3c000"><i>GZ</i></div><div class="cell" style="left:1301px;top:309px;background:#3cb371"><i>Sa</i></div><div class="cell" style="left:1336px;top:309px;background:#3cb371"><i>So</i></div><div class="cell" style="left:1371px;top:309px;background:#c3c000"><i>GZ</i></div><div class="cell" style="left:1406px;top:309px;background:#c3c000"><i>GZ</i></div><div class="cell" style="left:1441px;top:309px;background:#c3c000"><i>GZ</i></div><div class="cell" style="left:1476px;top:309px;background:#c3c000"><i>GZ</i></div><div class="grp" style="top:326px"><u></u><b><i>Entwicklung</i></b></div><div class="nm" style="top:343px">Felix Richard</div><div class="a" style="left:252px;top:359px;width:173px;height:1px;background:#ececec"></div><div class="cell" style="left:426px;top:343px;background:#95d9b1"></div><div class="cell" style="left:461px;top:343px;background:#c3c000"><i>GZ</i></div><div class="cell" style="left:496px;top:343px;background:#c3c000"><i>GZ</i></div><div class="cell" style="left:531px;top:343px;background:#c3c000"><i>GZ</i></div><div class="cell" style="left:566px;top:343px;background:#3cb371"><i>Sa</i></div><div class="cell" style="left:601px;top:343px;background:#3cb371"><i>So</i></div><div class="cell" style="left:636px;top:343px;background:#c3c000"><i>GZ</i></div><div class="cell" style="left:671px;top:343px;background:#c3c000"><i>GZ</i></div><div class="cell" style="left:706px;top:343px;background:#c3c000"><i>GZ</i></div><div class="cell" style="left:741px;top:343px;background:#95d9b1"></div><div class="cell" style="left:776px;top:343px;background:#c3c000"><i>GZ</i></div><div class="cell" style="left:811px;top:343px;background:#3cb371"><i>Sa</i></div><div class="cell" style="left:846px;top:343px;background:#3cb371"><i>So</i></div><div class="cell" style="left:881px;top:343px;background:#c3c000"><i>GZ</i></div><div class="cell" style="left:916px;top:343px;background:#c3c000"><i>GZ</i></div><div class="cell" style="left:951px;top:343px;background:#c3c000"><i>GZ</i></div><div class="cell" style="left:986px;top:343px;background:#c3c000"><i>GZ</i></div><div class="cell" style="left:1021px;top:343px;background:#c3c000"><i>GZ</i></div><div class="cell" style="left:1056px;top:343px;background:#3cb371"><i>Sa</i></div><div class="cell" style="left:1091px;top:343px;background:#95d9b1"></div><div class="cell" style="left:1126px;top:343px;background:#95d9b1"></div><div class="cell" style="left:1161px;top:343px;background:#c3c000"><i>GZ</i></div><div class="cell" style="left:1196px;top:343px;background:#c3c000"><i>GZ</i></div><div class="cell" style="left:1231px;top:343px;background:#c3c000"><i>GZ</i></div><div class="cell" style="left:1266px;top:343px;background:#c3c000"><i>GZ</i></div><div class="cell" style="left:1301px;top:343px;background:#3cb371"><i>Sa</i></div><div class="cell" style="left:1336px;top:343px;background:#3cb371"><i>So</i></div><div class="cell" style="left:1371px;top:343px;background:#c3c000"><i>GZ</i></div><div class="cell" style="left:1406px;top:343px;background:#c3c000"><i>GZ</i></div><div class="cell" style="left:1441px;top:343px;background:#c3c000"><i>GZ</i></div><div class="cell" style="left:1476px;top:343px;background:#c3c000"><i>GZ</i></div><div class="grp" style="top:360px"><u></u><b><i>Versand</i></b></div><div class="nm" style="top:377px">Chantal Vogel</div><div class="a" style="left:252px;top:393px;width:173px;height:1px;background:#ececec"></div><div class="cell" style="left:426px;top:377px;background:#95d9b1"></div><div class="cell" style="left:461px;top:377px;background:#ff0000"></div><div class="cell" style="left:496px;top:377px;background:#ff0000"></div><div class="cell" style="left:531px;top:377px;background:#ff0000"></div><div class="cell" style="left:566px;top:377px;background:#3cb371"><i>Sa</i></div><div class="cell" style="left:601px;top:377px;background:#3cb371"><i>So</i></div><div class="cell" style="left:636px;top:377px;background:#ff0000"></div><div class="cell" style="left:671px;top:377px;background:#ff0000"></div><div class="cell" style="left:706px;top:377px;background:#a8c8f0"><i>GT</i></div><div class="cell" style="left:741px;top:377px;background:#95d9b1"></div><div class="cell" style="left:776px;top:377px;background:#a8c8f0"><i>GT</i></div><div class="cell" style="left:811px;top:377px;background:#3cb371"><i>Sa</i></div><div class="cell" style="left:846px;top:377px;background:#3cb371"><i>So</i></div><div class="cell" style="left:881px;top:377px;background:#ff0000"></div><div class="cell" style="left:916px;top:377px;background:#ff0000"></div><div class="cell" style="left:951px;top:377px;background:#ff0000"></div><div class="cell" style="left:986px;top:377px;background:#ff0000"></div><div class="cell" style="left:1021px;top:377px;background:#ff0000"></div><div class="cell" style="left:1056px;top:377px;background:#3cb371"><i>Sa</i></div><div class="cell" style="left:1091px;top:377px;background:#95d9b1"></div><div class="cell" style="left:1126px;top:377px;background:#95d9b1"></div><div class="cell" style="left:1161px;top:377px;background:#ff0000"></div><div class="cell" style="left:1196px;top:377px;background:#ff0000"></div><div class="cell" style="left:1231px;top:377px;background:#ff0000"></div><div class="cell" style="left:1266px;top:377px;background:#ff0000"></div><div class="cell" style="left:1301px;top:377px;background:#3cb371"><i>Sa</i></div><div class="cell" style="left:1336px;top:377px;background:#3cb371"><i>So</i></div><div class="cell" style="left:1371px;top:377px;background:#ff0000"></div><div class="cell" style="left:1406px;top:377px;background:#ff0000"></div><div class="cell" style="left:1441px;top:377px;background:#ff0000"></div><div class="cell" style="left:1476px;top:377px;background:#ff0000"></div><div class="nm" style="top:394px">Markus Actuarius</div><div class="a" style="left:252px;top:410px;width:173px;height:1px;background:#ececec"></div><div class="cell" style="left:426px;top:394px;background:#95d9b1"></div><div class="cell" style="left:461px;top:394px;background:#808000;color:#74745a"><i>5h</i></div><div class="cell" style="left:496px;top:394px;background:#808000;color:#74745a"><i>5h</i></div><div class="cell" style="left:531px;top:394px;background:#808000;color:#74745a"><i>5h</i></div><div class="cell" style="left:566px;top:394px;background:#3cb371"><i>Sa</i></div><div class="cell" style="left:601px;top:394px;background:#3cb371"><i>So</i></div><div class="cell" style="left:636px;top:394px;background:#808000;color:#74745a"><i>5h</i></div><div class="cell" style="left:671px;top:394px;background:#808000;color:#74745a"><i>5h</i></div><div class="cell" style="left:706px;top:394px;background:#808000;color:#74745a"><i>5h</i></div><div class="cell" style="left:741px;top:394px;background:#95d9b1"></div><div class="cell" style="left:776px;top:394px;background:#808000;color:#74745a"><i>5h</i></div><div class="cell" style="left:811px;top:394px;background:#3cb371"><i>Sa</i></div><div class="cell" style="left:846px;top:394px;background:#3cb371"><i>So</i></div><div class="cell" style="left:881px;top:394px;background:#808000;color:#74745a"><i>5h</i></div><div class="cell" style="left:916px;top:394px;background:#808000;color:#74745a"><i>5h</i></div><div class="cell" style="left:951px;top:394px;background:#808000;color:#74745a"><i>5h</i></div><div class="cell" style="left:986px;top:394px;background:#808000;color:#74745a"><i>5h</i></div><div class="cell" style="left:1021px;top:394px;background:#808000;color:#74745a"><i>5h</i></div><div class="cell" style="left:1056px;top:394px;background:#3cb371"><i>Sa</i></div><div class="cell" style="left:1091px;top:394px;background:#95d9b1"></div><div class="cell" style="left:1126px;top:394px;background:#95d9b1"></div><div class="cell" style="left:1161px;top:394px;background:#808000;color:#74745a"><i>5h</i></div><div class="cell" style="left:1196px;top:394px;background:#808000;color:#74745a"><i>5h</i></div><div class="cell" style="left:1231px;top:394px;background:#808000;color:#74745a"><i>5h</i></div><div class="cell" style="left:1266px;top:394px;background:#808000;color:#74745a"><i>5h</i></div><div class="cell" style="left:1301px;top:394px;background:#3cb371"><i>Sa</i></div><div class="cell" style="left:1336px;top:394px;background:#3cb371"><i>So</i></div><div class="cell" style="left:1371px;top:394px;background:#808000;color:#74745a"><i>5h</i></div><div class="cell" style="left:1406px;top:394px;background:#808000;color:#74745a"><i>5h</i></div><div class="cell" style="left:1441px;top:394px;background:#808000;color:#74745a"><i>5h</i></div><div class="cell" style="left:1476px;top:394px;background:#808000;color:#74745a"><i>5h</i></div><div class="grp" style="top:411px"><u></u><b><i>Vertrieb/Support</i></b></div><div class="nm" style="top:428px">Edwin Samt</div><div class="a" style="left:252px;top:444px;width:173px;height:1px;background:#ececec"></div><div class="cell" style="left:426px;top:428px;background:#95d9b1"></div><div class="cell" style="left:461px;top:428px;background:#c3c000"><i>GZ</i></div><div class="cell" style="left:496px;top:428px;background:#c3c000"><i>GZ</i></div><div class="cell" style="left:531px;top:428px;background:#c3c000"><i>GZ</i></div><div class="cell" style="left:566px;top:428px;background:#3cb371"><i>Sa</i></div><div class="cell" style="left:601px;top:428px;background:#3cb371"><i>So</i></div><div class="cell" style="left:636px;top:428px;background:#c3c000"><i>GZ</i></div><div class="cell" style="left:671px;top:428px;background:#c3c000"><i>GZ</i></div><div class="cell" style="left:706px;top:428px;background:#c3c000"><i>GZ</i></div><div class="cell" style="left:741px;top:428px;background:#95d9b1"></div><div class="cell" style="left:776px;top:428px;background:#c3c000"><i>GZ</i></div><div class="cell" style="left:811px;top:428px;background:#3cb371"><i>Sa</i></div><div class="cell" style="left:846px;top:428px;background:#3cb371"><i>So</i></div><div class="cell" style="left:881px;top:428px;background:#c3c000"><i>GZ</i></div><div class="cell" style="left:916px;top:428px;background:#c3c000"><i>GZ</i></div><div class="cell" style="left:951px;top:428px;background:#c3c000"><i>GZ</i></div><div class="cell" style="left:986px;top:428px;background:#c3c000"><i>GZ</i></div><div class="cell" style="left:1021px;top:428px;background:#c3c000"><i>GZ</i></div><div class="cell" style="left:1056px;top:428px;background:#3cb371"><i>Sa</i></div><div class="cell" style="left:1091px;top:428px;background:#95d9b1"></div><div class="cell" style="left:1126px;top:428px;background:#95d9b1"></div><div class="cell" style="left:1161px;top:428px;background:#c3c000"><i>GZ</i></div><div class="cell" style="left:1196px;top:428px;background:#c3c000"><i>GZ</i></div><div class="cell" style="left:1231px;top:428px;background:#c3c000"><i>GZ</i></div><div class="cell" style="left:1266px;top:428px;background:#c3c000"><i>GZ</i></div><div class="cell" style="left:1301px;top:428px;background:#3cb371"><i>Sa</i></div><div class="cell" style="left:1336px;top:428px;background:#3cb371"><i>So</i></div><div class="cell" style="left:1371px;top:428px;background:#c3c000"><i>GZ</i></div><div class="cell" style="left:1406px;top:428px;background:#c3c000"><i>GZ</i></div><div class="cell" style="left:1441px;top:428px;background:#c3c000"><i>GZ</i></div><div class="cell" style="left:1476px;top:428px;background:#c3c000"><i>GZ</i></div><div class="nm" style="top:445px">Paul Hammer</div><div class="a" style="left:252px;top:461px;width:173px;height:1px;background:#ececec"></div><div class="cell" style="left:426px;top:445px;background:#95d9b1"></div><div class="cell" style="left:461px;top:445px;background:#ff0000"></div><div class="cell" style="left:496px;top:445px;background:#ff0000"></div><div class="cell" style="left:531px;top:445px;background:#ff0000"></div><div class="cell" style="left:566px;top:445px;background:#3cb371"></div><div class="cell" style="left:601px;top:445px;background:#3cb371"></div><div class="cell" style="left:636px;top:445px;background:#ff0000"></div><div class="cell" style="left:671px;top:445px;background:#ff0000"></div><div class="cell" style="left:706px;top:445px;background:#ff0000"></div><div class="cell" style="left:741px;top:445px;background:#95d9b1"></div><div class="cell" style="left:776px;top:445px;background:#ff0000"></div><div class="cell" style="left:811px;top:445px;background:#3cb371"></div><div class="cell" style="left:846px;top:445px;background:#3cb371"></div><div class="cell" style="left:881px;top:445px;background:#ff0000"></div><div class="cell" style="left:916px;top:445px;background:#ff0000"></div><div class="cell" style="left:951px;top:445px;background:#ff0000"></div><div class="cell" style="left:986px;top:445px;background:#ff0000"></div><div class="cell" style="left:1021px;top:445px;background:#ff0000"></div><div class="cell" style="left:1056px;top:445px;background:#3cb371"></div><div class="cell" style="left:1091px;top:445px;background:#95d9b1"></div><div class="cell" style="left:1126px;top:445px;background:#95d9b1"></div><div class="cell" style="left:1161px;top:445px;background:#ff0000"></div><div class="cell" style="left:1196px;top:445px;background:#ff0000"></div><div class="cell" style="left:1231px;top:445px;background:#ff0000"></div><div class="cell" style="left:1266px;top:445px;background:#ff0000"></div><div class="cell" style="left:1301px;top:445px;background:#3cb371"></div><div class="cell" style="left:1336px;top:445px;background:#3cb371"></div><div class="cell" style="left:1371px;top:445px;background:#ff0000"></div><div class="cell" style="left:1406px;top:445px;background:#ff0000"></div><div class="cell" style="left:1441px;top:445px;background:#ff0000"></div><div class="cell" style="left:1476px;top:445px;background:#ff0000"></div><div class="a" style="left:252px;top:462px;width:1303px;height:16px;background:#ebebeb"></div><div class="a" style="left:252px;top:479px;width:7px;height:16px;background:#ffd800"></div><div class="nm" style="left:265px;top:479px">Urlaub</div><div class="a" style="left:252px;top:495px;width:1303px;height:1px;background:#ececec"></div><div class="num" style="left:461px;top:479px"><i>3</i></div><div class="num" style="left:496px;top:479px"><i>2</i></div><div class="num" style="left:531px;top:479px"><i>1</i></div><div class="num" style="left:1161px;top:479px"><i>1</i></div><div class="num" style="left:1196px;top:479px"><i>1</i></div><div class="num" style="left:1231px;top:479px"><i>1</i></div><div class="num" style="left:1266px;top:479px"><i>1</i></div><div class="num" style="left:1371px;top:479px"><i>1</i></div><div class="num" style="left:1406px;top:479px"><i>1</i></div><div class="num" style="left:1441px;top:479px"><i>1</i></div><div class="num" style="left:1476px;top:479px"><i>1</i></div><div class="a" style="left:252px;top:496px;width:7px;height:16px;background:#7b7bf7"></div><div class="nm" style="left:265px;top:496px">Dienstreise Tag</div><div class="a" style="left:252px;top:512px;width:1303px;height:1px;background:#ececec"></div><div class="num" style="left:531px;top:496px"><i>1</i></div><div class="num" style="left:636px;top:496px"><i>1</i></div><div class="num" style="left:671px;top:496px"><i>1</i></div><div class="num" style="left:706px;top:496px"><i>1</i></div><div class="num" style="left:776px;top:496px"><i>1</i></div><div class="num" style="left:881px;top:496px"><i>1</i></div><div class="num" style="left:916px;top:496px"><i>1</i></div><div class="num" style="left:951px;top:496px"><i>1</i></div><div class="num" style="left:986px;top:496px"><i>1</i></div><div class="num" style="left:1021px;top:496px"><i>1</i></div><div class="a" style="left:252px;top:513px;width:7px;height:16px;background:#a0a0a8"></div><div class="nm" style="left:265px;top:513px">Dienstgang</div><div class="a" style="left:252px;top:529px;width:1303px;height:1px;background:#ececec"></div><div class="num" style="left:461px;top:513px"><i>1</i></div><div class="num" style="left:496px;top:513px"><i>1</i></div><div class="num" style="left:531px;top:513px"><i>1</i></div><div class="a" style="left:252px;top:530px;width:7px;height:16px;background:#a8c8f0"></div><div class="nm" style="left:265px;top:530px">Gleittag</div><div class="a" style="left:252px;top:546px;width:1303px;height:1px;background:#ececec"></div><div class="num" style="left:706px;top:530px"><i>1</i></div><div class="num" style="left:776px;top:530px"><i>1</i></div><div class="a" style="left:252px;top:547px;width:1303px;height:16px;background:#ebebeb"></div><div class="a" style="left:252px;top:564px;width:7px;height:16px;background:#95d9b1"></div><div class="nm" style="left:265px;top:564px">Feiertag</div><div class="a" style="left:252px;top:580px;width:1303px;height:1px;background:#ececec"></div><div class="num" style="left:426px;top:564px"><i>10</i></div><div class="num" style="left:741px;top:564px"><i>10</i></div><div class="num" style="left:1091px;top:564px"><i>10</i></div><div class="num" style="left:1126px;top:564px"><i>10</i></div><div class="a" style="left:252px;top:581px;width:7px;height:16px;background:#3cb371"></div><div class="nm" style="left:265px;top:581px">Samstag</div><div class="a" style="left:252px;top:597px;width:1303px;height:1px;background:#ececec"></div><div class="num" style="left:566px;top:581px"><i>9</i></div><div class="num" style="left:601px;top:581px"><i>1</i></div><div class="num" style="left:811px;top:581px"><i>9</i></div><div class="num" style="left:846px;top:581px"><i>1</i></div><div class="num" style="left:1056px;top:581px"><i>9</i></div><div class="num" style="left:1301px;top:581px"><i>9</i></div><div class="num" style="left:1336px;top:581px"><i>1</i></div><div class="a" style="left:252px;top:598px;width:7px;height:16px;background:#3cb371"></div><div class="nm" style="left:265px;top:598px">Sonntag</div><div class="a" style="left:252px;top:614px;width:1303px;height:1px;background:#ececec"></div><div class="num" style="left:601px;top:598px"><i>8</i></div><div class="num" style="left:846px;top:598px"><i>8</i></div><div class="num" style="left:1336px;top:598px"><i>8</i></div><div class="a" style="left:252px;top:615px;width:7px;height:16px;background:#c3c000"></div><div class="nm" style="left:265px;top:615px">Gleitzeit</div><div class="a" style="left:252px;top:631px;width:1303px;height:1px;background:#ececec"></div><div class="num" style="left:461px;top:615px"><i>3</i></div><div class="num" style="left:496px;top:615px"><i>4</i></div><div class="num" style="left:531px;top:615px"><i>4</i></div><div class="num" style="left:636px;top:615px"><i>6</i></div><div class="num" style="left:671px;top:615px"><i>6</i></div><div class="num" style="left:706px;top:615px"><i>6</i></div><div class="num" style="left:776px;top:615px"><i>6</i></div><div class="num" style="left:881px;top:615px"><i>6</i></div><div class="num" style="left:916px;top:615px"><i>6</i></div><div class="num" style="left:951px;top:615px"><i>6</i></div><div class="num" style="left:986px;top:615px"><i>6</i></div><div class="num" style="left:1021px;top:615px"><i>6</i></div><div class="num" style="left:1161px;top:615px"><i>6</i></div><div class="num" style="left:1196px;top:615px"><i>6</i></div><div class="num" style="left:1231px;top:615px"><i>6</i></div><div class="num" style="left:1266px;top:615px"><i>6</i></div><div class="num" style="left:1371px;top:615px"><i>6</i></div><div class="num" style="left:1406px;top:615px"><i>6</i></div><div class="num" style="left:1441px;top:615px"><i>6</i></div><div class="num" style="left:1476px;top:615px"><i>6</i></div><div class="a" style="left:252px;top:632px;width:7px;height:16px;background:#ff0000"></div><div class="nm" style="left:265px;top:632px">Stundenbasis Achim Mo-Do</div><div class="a" style="left:252px;top:648px;width:1303px;height:1px;background:#ececec"></div><div class="num" style="left:461px;top:632px"><i>1</i></div><div class="num" style="left:496px;top:632px"><i>1</i></div><div class="num" style="left:531px;top:632px"><i>1</i></div><div class="num" style="left:636px;top:632px"><i>1</i></div><div class="num" style="left:671px;top:632px"><i>1</i></div><div class="num" style="left:881px;top:632px"><i>1</i></div><div class="num" style="left:916px;top:632px"><i>1</i></div><div class="num" style="left:951px;top:632px"><i>1</i></div><div class="num" style="left:986px;top:632px"><i>1</i></div><div class="num" style="left:1021px;top:632px"><i>1</i></div><div class="num" style="left:1161px;top:632px"><i>1</i></div><div class="num" style="left:1196px;top:632px"><i>1</i></div><div class="num" style="left:1231px;top:632px"><i>1</i></div><div class="num" style="left:1266px;top:632px"><i>1</i></div><div class="num" style="left:1371px;top:632px"><i>1</i></div><div class="num" style="left:1406px;top:632px"><i>1</i></div><div class="num" style="left:1441px;top:632px"><i>1</i></div><div class="num" style="left:1476px;top:632px"><i>1</i></div><div class="a" style="left:252px;top:649px;width:7px;height:16px;background:#808000"></div><div class="nm" style="left:265px;top:649px">5 h</div><div class="a" style="left:252px;top:665px;width:1303px;height:1px;background:#ececec"></div><div class="num" style="left:461px;top:649px"><i>1</i></div><div class="num" style="left:496px;top:649px"><i>1</i></div><div class="num" style="left:531px;top:649px"><i>1</i></div><div class="num" style="left:636px;top:649px"><i>1</i></div><div class="num" style="left:671px;top:649px"><i>1</i></div><div class="num" style="left:706px;top:649px"><i>1</i></div><div class="num" style="left:776px;top:649px"><i>1</i></div><div class="num" style="left:881px;top:649px"><i>1</i></div><div class="num" style="left:916px;top:649px"><i>1</i></div><div class="num" style="left:951px;top:649px"><i>1</i></div><div class="num" style="left:986px;top:649px"><i>1</i></div><div class="num" style="left:1021px;top:649px"><i>1</i></div><div class="num" style="left:1161px;top:649px"><i>1</i></div><div class="num" style="left:1196px;top:649px"><i>1</i></div><div class="num" style="left:1231px;top:649px"><i>1</i></div><div class="num" style="left:1266px;top:649px"><i>1</i></div><div class="num" style="left:1371px;top:649px"><i>1</i></div><div class="num" style="left:1406px;top:649px"><i>1</i></div><div class="num" style="left:1441px;top:649px"><i>1</i></div><div class="num" style="left:1476px;top:649px"><i>1</i></div><div class="a" style="left:252px;top:666px;width:7px;height:16px;background:#ff0000"></div><div class="nm" style="left:265px;top:666px">Stundenbasis</div><div class="a" style="left:252px;top:682px;width:1303px;height:1px;background:#ececec"></div><div class="num" style="left:461px;top:666px"><i>1</i></div><div class="num" style="left:496px;top:666px"><i>1</i></div><div class="num" style="left:531px;top:666px"><i>1</i></div><div class="num" style="left:636px;top:666px"><i>1</i></div><div class="num" style="left:671px;top:666px"><i>1</i></div><div class="num" style="left:706px;top:666px"><i>1</i></div><div class="num" style="left:776px;top:666px"><i>1</i></div><div class="num" style="left:881px;top:666px"><i>1</i></div><div class="num" style="left:916px;top:666px"><i>1</i></div><div class="num" style="left:951px;top:666px"><i>1</i></div><div class="num" style="left:986px;top:666px"><i>1</i></div><div class="num" style="left:1021px;top:666px"><i>1</i></div><div class="num" style="left:1161px;top:666px"><i>1</i></div><div class="num" style="left:1196px;top:666px"><i>1</i></div><div class="num" style="left:1231px;top:666px"><i>1</i></div><div class="num" style="left:1266px;top:666px"><i>1</i></div><div class="num" style="left:1371px;top:666px"><i>1</i></div><div class="num" style="left:1406px;top:666px"><i>1</i></div><div class="num" style="left:1441px;top:666px"><i>1</i></div><div class="num" style="left:1476px;top:666px"><i>1</i></div><div class="a" style="left:252px;top:683px;width:7px;height:16px;background:#3cb371"></div><div class="nm" style="left:265px;top:683px">Sa Stundenbasis 2</div><div class="a" style="left:252px;top:699px;width:1303px;height:1px;background:#ececec"></div><div class="num" style="left:566px;top:683px"><i>1</i></div><div class="num" style="left:811px;top:683px"><i>1</i></div><div class="num" style="left:1056px;top:683px"><i>1</i></div><div class="num" style="left:1301px;top:683px"><i>1</i></div><div class="a" style="left:252px;top:700px;width:7px;height:16px;background:#3cb371"></div><div class="nm" style="left:265px;top:700px">So Stundenbasis 2</div><div class="a" style="left:252px;top:716px;width:1303px;height:1px;background:#ececec"></div><div class="num" style="left:601px;top:700px"><i>1</i></div><div class="num" style="left:846px;top:700px"><i>1</i></div><div class="num" style="left:1336px;top:700px"><i>1</i></div><div class="a" style="left:425px;top:462px;width:1px;height:255px;background:rgba(0,0,0,.06)"></div><div class="a" style="left:460px;top:462px;width:1px;height:255px;background:rgba(0,0,0,.06)"></div><div class="a" style="left:495px;top:462px;width:1px;height:255px;background:rgba(0,0,0,.06)"></div><div class="a" style="left:530px;top:462px;width:1px;height:255px;background:rgba(0,0,0,.06)"></div><div class="a" style="left:565px;top:462px;width:1px;height:255px;background:rgba(0,0,0,.06)"></div><div class="a" style="left:600px;top:462px;width:1px;height:255px;background:rgba(0,0,0,.06)"></div><div class="a" style="left:635px;top:462px;width:1px;height:255px;background:rgba(0,0,0,.06)"></div><div class="a" style="left:670px;top:462px;width:1px;height:255px;background:rgba(0,0,0,.06)"></div><div class="a" style="left:705px;top:462px;width:1px;height:255px;background:rgba(0,0,0,.06)"></div><div class="a" style="left:740px;top:462px;width:1px;height:255px;background:rgba(0,0,0,.06)"></div><div class="a" style="left:775px;top:462px;width:1px;height:255px;background:rgba(0,0,0,.06)"></div><div class="a" style="left:810px;top:462px;width:1px;height:255px;background:rgba(0,0,0,.06)"></div><div class="a" style="left:845px;top:462px;width:1px;height:255px;background:rgba(0,0,0,.06)"></div><div class="a" style="left:880px;top:462px;width:1px;height:255px;background:rgba(0,0,0,.06)"></div><div class="a" style="left:915px;top:462px;width:1px;height:255px;background:rgba(0,0,0,.06)"></div><div class="a" style="left:950px;top:462px;width:1px;height:255px;background:rgba(0,0,0,.06)"></div><div class="a" style="left:985px;top:462px;width:1px;height:255px;background:rgba(0,0,0,.06)"></div><div class="a" style="left:1020px;top:462px;width:1px;height:255px;background:rgba(0,0,0,.06)"></div><div class="a" style="left:1055px;top:462px;width:1px;height:255px;background:rgba(0,0,0,.06)"></div><div class="a" style="left:1090px;top:462px;width:1px;height:255px;background:rgba(0,0,0,.06)"></div><div class="a" style="left:1125px;top:462px;width:1px;height:255px;background:rgba(0,0,0,.06)"></div><div class="a" style="left:1160px;top:462px;width:1px;height:255px;background:rgba(0,0,0,.06)"></div><div class="a" style="left:1195px;top:462px;width:1px;height:255px;background:rgba(0,0,0,.06)"></div><div class="a" style="left:1230px;top:462px;width:1px;height:255px;background:rgba(0,0,0,.06)"></div><div class="a" style="left:1265px;top:462px;width:1px;height:255px;background:rgba(0,0,0,.06)"></div><div class="a" style="left:1300px;top:462px;width:1px;height:255px;background:rgba(0,0,0,.06)"></div><div class="a" style="left:1335px;top:462px;width:1px;height:255px;background:rgba(0,0,0,.06)"></div><div class="a" style="left:1370px;top:462px;width:1px;height:255px;background:rgba(0,0,0,.06)"></div><div class="a" style="left:1405px;top:462px;width:1px;height:255px;background:rgba(0,0,0,.06)"></div><div class="a" style="left:1440px;top:462px;width:1px;height:255px;background:rgba(0,0,0,.06)"></div><div class="a" style="left:1475px;top:462px;width:1px;height:255px;background:rgba(0,0,0,.06)"></div><div class="a" style="left:1510px;top:462px;width:1px;height:255px;background:rgba(0,0,0,.06)"></div><div class="a" style="left:234px;top:716px;width:1321px;height:16.4px;background:#555"></div><div class="a" style="left:234px;top:716px;width:17px;height:16.4px;background:#999;border:1px solid #666"></div><div class="a" style="left:251px;top:716px;width:938px;height:16.4px;background:#999;border:1px solid #6e6e6e;border-left:none;border-right:none"></div><div class="a" style="left:1539px;top:717px;width:16px;height:15.4px;background:#999"></div><svg class="a" style="left:234px;top:716px" width="1322" height="17" viewBox="0 0 1322 17"><path d="M11 4v9l-5.500-4.500z" fill="#222"/><path d="M1311 4v9l5.500-4.500z" fill="#2a2a2a"/></svg><div class="a" style="left:232px;top:735.5px;width:1325px;height:5px;background:#444"></div><div class="t" style="left:236px;top:749px;font-size:19px;color:#444;letter-spacing:.18px">Information</div><svg class="a" style="left:1520px;top:751px" width="34" height="14" viewBox="0 0 34 14"><path d="M4.500 2h5M5.400 2v4.400M8.600 2v4.400M3.600 6.600h6.800M7 6.600V11" stroke="#222" stroke-width="1.200" fill="none"/><rect x="7.400" y="2" width="1.600" height="4.400" fill="#222"/><path d="M22.500 3l7 7M29.500 3l-7 7" stroke="#222" stroke-width="1.500"/></svg><div class="a" style="left:232px;top:775px;width:1325px;height:155px;background:#fff;border-top:1px solid #666;border-left:1px solid #888"></div><div class="a" style="left:233px;top:777px;width:17px;height:85px;background:#999"></div><div class="a" style="left:250px;top:777px;width:1306px;height:86px;overflow:hidden"><div class="a" style="left:200px;top:0;width:1px;height:85px;background:#e6e6e6"></div><div class="cb" style="left:3px;top:2px"><svg width="9" height="9" viewBox="0 0 9 9" style="position:absolute;left:0;top:0"><path d="M1.500 4.500l2 2.200 4-5" fill="none" stroke="#666" stroke-width="1.200"/></svg></div><div class="sw" style="left:16px;top:0px;background:#ff0000"></div><div class="lg" style="left:34px;top:0px">Anwesende Mitarbeiter</div><div class="cb" style="left:3px;top:19px"><svg width="9" height="9" viewBox="0 0 9 9" style="position:absolute;left:0;top:0"><path d="M1.500 4.500l2 2.200 4-5" fill="none" stroke="#666" stroke-width="1.200"/></svg></div><div class="sw" style="left:16px;top:17px;background:#00ffff"></div><div class="lg" style="left:34px;top:17px">Arbeitsunfall</div><div class="cb" style="left:3px;top:36px"><svg width="9" height="9" viewBox="0 0 9 9" style="position:absolute;left:0;top:0"><path d="M1.500 4.500l2 2.200 4-5" fill="none" stroke="#666" stroke-width="1.200"/></svg></div><div class="sw" style="left:16px;top:34px;background:#ff9999"></div><div class="lg" style="left:34px;top:34px">Beginn Pause</div><div class="cb" style="left:3px;top:53px"><svg width="9" height="9" viewBox="0 0 9 9" style="position:absolute;left:0;top:0"><path d="M1.500 4.500l2 2.200 4-5" fill="none" stroke="#666" stroke-width="1.200"/></svg></div><div class="sw" style="left:16px;top:51px;background:#ffff00"></div><div class="lg" style="left:34px;top:51px">Bereitschaft</div><div class="cb" style="left:3px;top:70px"><svg width="9" height="9" viewBox="0 0 9 9" style="position:absolute;left:0;top:0"><path d="M1.500 4.500l2 2.200 4-5" fill="none" stroke="#666" stroke-width="1.200"/></svg></div><div class="sw" style="left:16px;top:68px;background:#a8c8f0"></div><div class="lg" style="left:34px;top:68px">Buchungsabfrage</div><div class="a" style="left:400px;top:0;width:1px;height:85px;background:#e6e6e6"></div><div class="cb" style="left:203px;top:2px"><svg width="9" height="9" viewBox="0 0 9 9" style="position:absolute;left:0;top:0"><path d="M1.500 4.500l2 2.200 4-5" fill="none" stroke="#666" stroke-width="1.200"/></svg></div><div class="sw" style="left:216px;top:0px;background:#a0a0a8"></div><div class="lg" style="left:234px;top:0px">Dienstgang</div><div class="cb" style="left:203px;top:19px"><svg width="9" height="9" viewBox="0 0 9 9" style="position:absolute;left:0;top:0"><path d="M1.500 4.500l2 2.200 4-5" fill="none" stroke="#666" stroke-width="1.200"/></svg></div><div class="sw" style="left:216px;top:17px;background:#8585fa"></div><div class="lg" style="left:234px;top:17px">Dienstreise</div><div class="cb" style="left:203px;top:36px"><svg width="9" height="9" viewBox="0 0 9 9" style="position:absolute;left:0;top:0"><path d="M1.500 4.500l2 2.200 4-5" fill="none" stroke="#666" stroke-width="1.200"/></svg></div><div class="sw" style="left:216px;top:34px;background:#7878f8"></div><div class="lg" style="left:234px;top:34px">Dienstreise Tag</div><div class="cb" style="left:203px;top:53px"><svg width="9" height="9" viewBox="0 0 9 9" style="position:absolute;left:0;top:0"><path d="M1.500 4.500l2 2.200 4-5" fill="none" stroke="#666" stroke-width="1.200"/></svg></div><div class="sw" style="left:216px;top:51px;background:#7878f8"></div><div class="lg" style="left:234px;top:51px">DR 1/2 Tag</div><div class="cb" style="left:203px;top:70px"><svg width="9" height="9" viewBox="0 0 9 9" style="position:absolute;left:0;top:0"><path d="M1.500 4.500l2 2.200 4-5" fill="none" stroke="#666" stroke-width="1.200"/></svg></div><div class="sw" style="left:216px;top:68px;background:#c0ffc0"></div><div class="lg" style="left:234px;top:68px">Elternzeit</div><div class="a" style="left:600px;top:0;width:1px;height:85px;background:#e6e6e6"></div><div class="cb" style="left:403px;top:2px"><svg width="9" height="9" viewBox="0 0 9 9" style="position:absolute;left:0;top:0"><path d="M1.500 4.500l2 2.200 4-5" fill="none" stroke="#666" stroke-width="1.200"/></svg></div><div class="sw" style="left:416px;top:0px;background:#ff9999"></div><div class="lg" style="left:434px;top:0px">Ende Pause</div><div class="cb" style="left:403px;top:19px"><svg width="9" height="9" viewBox="0 0 9 9" style="position:absolute;left:0;top:0"><path d="M1.500 4.500l2 2.200 4-5" fill="none" stroke="#666" stroke-width="1.200"/></svg></div><div class="sw" style="left:416px;top:17px;background:#800000"></div><div class="lg" style="left:434px;top:17px">Feiertag</div><div class="cb" style="left:403px;top:36px"><svg width="9" height="9" viewBox="0 0 9 9" style="position:absolute;left:0;top:0"><path d="M1.500 4.500l2 2.200 4-5" fill="none" stroke="#666" stroke-width="1.200"/></svg></div><div class="sw" style="left:416px;top:34px;background:#ffff00"></div><div class="lg" style="left:434px;top:34px">Feiertag Christmann</div><div class="cb" style="left:403px;top:53px"><svg width="9" height="9" viewBox="0 0 9 9" style="position:absolute;left:0;top:0"><path d="M1.500 4.500l2 2.200 4-5" fill="none" stroke="#666" stroke-width="1.200"/></svg></div><div class="sw" style="left:416px;top:51px;background:#d2b48c"></div><div class="lg" style="left:434px;top:51px">Freistellung</div><div class="cb" style="left:403px;top:70px"><svg width="9" height="9" viewBox="0 0 9 9" style="position:absolute;left:0;top:0"><path d="M1.500 4.500l2 2.200 4-5" fill="none" stroke="#666" stroke-width="1.200"/></svg></div><div class="sw" style="left:416px;top:68px;background:#a8c8f0"></div><div class="lg" style="left:434px;top:68px">Gleittag</div><div class="a" style="left:800px;top:0;width:1px;height:85px;background:#e6e6e6"></div><div class="cb" style="left:603px;top:2px"><svg width="9" height="9" viewBox="0 0 9 9" style="position:absolute;left:0;top:0"><path d="M1.500 4.500l2 2.200 4-5" fill="none" stroke="#666" stroke-width="1.200"/></svg></div><div class="sw" style="left:616px;top:0px;background:#0000ff"></div><div class="lg" style="left:634px;top:0px">Home Office</div><div class="cb" style="left:603px;top:19px"><svg width="9" height="9" viewBox="0 0 9 9" style="position:absolute;left:0;top:0"><path d="M1.500 4.500l2 2.200 4-5" fill="none" stroke="#666" stroke-width="1.200"/></svg></div><div class="sw" style="left:616px;top:17px;background:#ff4500"></div><div class="lg" style="left:634px;top:17px">Krankheit</div><div class="cb" style="left:603px;top:36px"><svg width="9" height="9" viewBox="0 0 9 9" style="position:absolute;left:0;top:0"><path d="M1.500 4.500l2 2.200 4-5" fill="none" stroke="#666" stroke-width="1.200"/></svg></div><div class="sw" style="left:616px;top:34px;background:#ff0000"></div><div class="lg" style="left:634px;top:34px">Krankheit &gt; 42 Tage</div><div class="cb" style="left:603px;top:53px"><svg width="9" height="9" viewBox="0 0 9 9" style="position:absolute;left:0;top:0"><path d="M1.500 4.500l2 2.200 4-5" fill="none" stroke="#666" stroke-width="1.200"/></svg></div><div class="sw" style="left:616px;top:51px;background:#ff9999"></div><div class="lg" style="left:634px;top:51px">Krankheit Kind</div><div class="cb" style="left:603px;top:70px"><svg width="9" height="9" viewBox="0 0 9 9" style="position:absolute;left:0;top:0"><path d="M1.500 4.500l2 2.200 4-5" fill="none" stroke="#666" stroke-width="1.200"/></svg></div><div class="sw" style="left:616px;top:68px;background:#ff0000"></div><div class="lg" style="left:634px;top:68px">Krankheit ohne Krankenschein</div><div class="a" style="left:1000px;top:0;width:1px;height:85px;background:#e6e6e6"></div><div class="cb" style="left:803px;top:2px"><svg width="9" height="9" viewBox="0 0 9 9" style="position:absolute;left:0;top:0"><path d="M1.500 4.500l2 2.200 4-5" fill="none" stroke="#666" stroke-width="1.200"/></svg></div><div class="sw" style="left:816px;top:0px;background:#ff6e6e"></div><div class="lg" style="left:834px;top:0px">Kur</div><div class="cb" style="left:803px;top:19px"><svg width="9" height="9" viewBox="0 0 9 9" style="position:absolute;left:0;top:0"><path d="M1.500 4.500l2 2.200 4-5" fill="none" stroke="#666" stroke-width="1.200"/></svg></div><div class="sw" style="left:816px;top:17px;background:#98fb98"></div><div class="lg" style="left:834px;top:17px">Mutterschutz</div><div class="cb" style="left:803px;top:36px"><svg width="9" height="9" viewBox="0 0 9 9" style="position:absolute;left:0;top:0"><path d="M1.500 4.500l2 2.200 4-5" fill="none" stroke="#666" stroke-width="1.200"/></svg></div><div class="sw" style="left:816px;top:34px;background:#800080"></div><div class="lg" style="left:834px;top:34px">Nachtschicht</div><div class="cb" style="left:803px;top:53px"><svg width="9" height="9" viewBox="0 0 9 9" style="position:absolute;left:0;top:0"><path d="M1.500 4.500l2 2.200 4-5" fill="none" stroke="#666" stroke-width="1.200"/></svg></div><div class="sw" style="left:816px;top:51px;background:#00ffff"></div><div class="lg" style="left:834px;top:51px">Onlinestatus</div><div class="cb" style="left:803px;top:70px"><svg width="9" height="9" viewBox="0 0 9 9" style="position:absolute;left:0;top:0"><path d="M1.500 4.500l2 2.200 4-5" fill="none" stroke="#666" stroke-width="1.200"/></svg></div><div class="sw" style="left:816px;top:68px;background:#00ff00"></div><div class="lg" style="left:834px;top:68px">Privat</div><div class="a" style="left:1200px;top:0;width:1px;height:85px;background:#e6e6e6"></div><div class="cb" style="left:1003px;top:2px"><svg width="9" height="9" viewBox="0 0 9 9" style="position:absolute;left:0;top:0"><path d="M1.500 4.500l2 2.200 4-5" fill="none" stroke="#666" stroke-width="1.200"/></svg></div><div class="sw" style="left:1016px;top:0px;background:#800080"></div><div class="lg" style="left:1034px;top:0px">Rahmenzeit</div><div class="cb" style="left:1003px;top:19px"><svg width="9" height="9" viewBox="0 0 9 9" style="position:absolute;left:0;top:0"><path d="M1.500 4.500l2 2.200 4-5" fill="none" stroke="#666" stroke-width="1.200"/></svg></div><div class="sw" style="left:1016px;top:17px;background:#00ff00"></div><div class="lg" style="left:1034px;top:17px">Rahmenzeit freigeben</div><div class="cb" style="left:1003px;top:36px"><svg width="9" height="9" viewBox="0 0 9 9" style="position:absolute;left:0;top:0"><path d="M1.500 4.500l2 2.200 4-5" fill="none" stroke="#666" stroke-width="1.200"/></svg></div><div class="sw" style="left:1016px;top:34px;background:#a0a0a8"></div><div class="lg" style="left:1034px;top:34px">Raucherpause</div><div class="cb" style="left:1003px;top:53px"><svg width="9" height="9" viewBox="0 0 9 9" style="position:absolute;left:0;top:0"><path d="M1.500 4.500l2 2.200 4-5" fill="none" stroke="#666" stroke-width="1.200"/></svg></div><div class="sw" style="left:1016px;top:51px;background:#ffff00"></div><div class="lg" style="left:1034px;top:51px">Reformationstag</div><div class="cb" style="left:1003px;top:70px"><svg width="9" height="9" viewBox="0 0 9 9" style="position:absolute;left:0;top:0"><path d="M1.500 4.500l2 2.200 4-5" fill="none" stroke="#666" stroke-width="1.200"/></svg></div><div class="sw" style="left:1016px;top:68px;background:#00ff00"></div><div class="lg" style="left:1034px;top:68px">Reset Accounts</div><div class="a" style="left:1400px;top:0;width:1px;height:85px;background:#e6e6e6"></div><div class="cb" style="left:1203px;top:2px"><svg width="9" height="9" viewBox="0 0 9 9" style="position:absolute;left:0;top:0"><path d="M1.500 4.500l2 2.200 4-5" fill="none" stroke="#666" stroke-width="1.200"/></svg></div><div class="sw" style="left:1216px;top:0px;background:#000000"></div><div class="lg" style="left:1234px;top:0px">Ruhebereitschaft</div><div class="cb" style="left:1203px;top:19px"><svg width="9" height="9" viewBox="0 0 9 9" style="position:absolute;left:0;top:0"><path d="M1.500 4.500l2 2.200 4-5" fill="none" stroke="#666" stroke-width="1.200"/></svg></div><div class="sw" style="left:1216px;top:17px;background:#ffd800"></div><div class="lg" style="left:1234px;top:17px">Sonderurlaub</div><div class="cb" style="left:1203px;top:36px"><svg width="9" height="9" viewBox="0 0 9 9" style="position:absolute;left:0;top:0"><path d="M1.500 4.500l2 2.200 4-5" fill="none" stroke="#666" stroke-width="1.200"/></svg></div><div class="sw" style="left:1216px;top:34px;background:#000000"></div><div class="lg" style="left:1234px;top:34px">Unentschuldigtes Fehlen</div><div class="cb" style="left:1203px;top:53px"><svg width="9" height="9" viewBox="0 0 9 9" style="position:absolute;left:0;top:0"><path d="M1.500 4.500l2 2.200 4-5" fill="none" stroke="#666" stroke-width="1.200"/></svg></div><div class="sw" style="left:1216px;top:51px;background:#ffd800"></div><div class="lg" style="left:1234px;top:51px">Urlaub</div><div class="cb" style="left:1203px;top:70px"><svg width="9" height="9" viewBox="0 0 9 9" style="position:absolute;left:0;top:0"><path d="M1.500 4.500l2 2.200 4-5" fill="none" stroke="#666" stroke-width="1.200"/></svg></div><div class="sw" style="left:1216px;top:68px;background:#ffd800"></div><div class="lg" style="left:1234px;top:68px">Urlaub 1/2 Tag</div><div class="a" style="left:0;top:16px;width:1306px;height:1px;background:#e6e6e6"></div><div class="a" style="left:0;top:33px;width:1306px;height:1px;background:#e6e6e6"></div><div class="a" style="left:0;top:50px;width:1306px;height:1px;background:#e6e6e6"></div><div class="a" style="left:0;top:67px;width:1306px;height:1px;background:#e6e6e6"></div><div class="a" style="left:0;top:84px;width:1306px;height:1px;background:#e6e6e6"></div></div><div class="a" style="left:234px;top:930px;width:1321px;height:16.4px;background:#555"></div><div class="a" style="left:234px;top:930px;width:17px;height:16.4px;background:#999;border:1px solid #666"></div><div class="a" style="left:251px;top:930px;width:920px;height:16.4px;background:#999;border:1px solid #6e6e6e;border-left:none;border-right:none"></div><div class="a" style="left:1539px;top:931px;width:16px;height:15.4px;background:#999"></div><svg class="a" style="left:234px;top:930px" width="1322" height="17" viewBox="0 0 1322 17"><path d="M11 4v9l-5.500-4.500z" fill="#222"/><path d="M1311 4v9l5.500-4.500z" fill="#2a2a2a"/></svg><div class="a" style="left:1564px;top:26px;width:1px;height:927px;background:#696969"></div></body></html>
